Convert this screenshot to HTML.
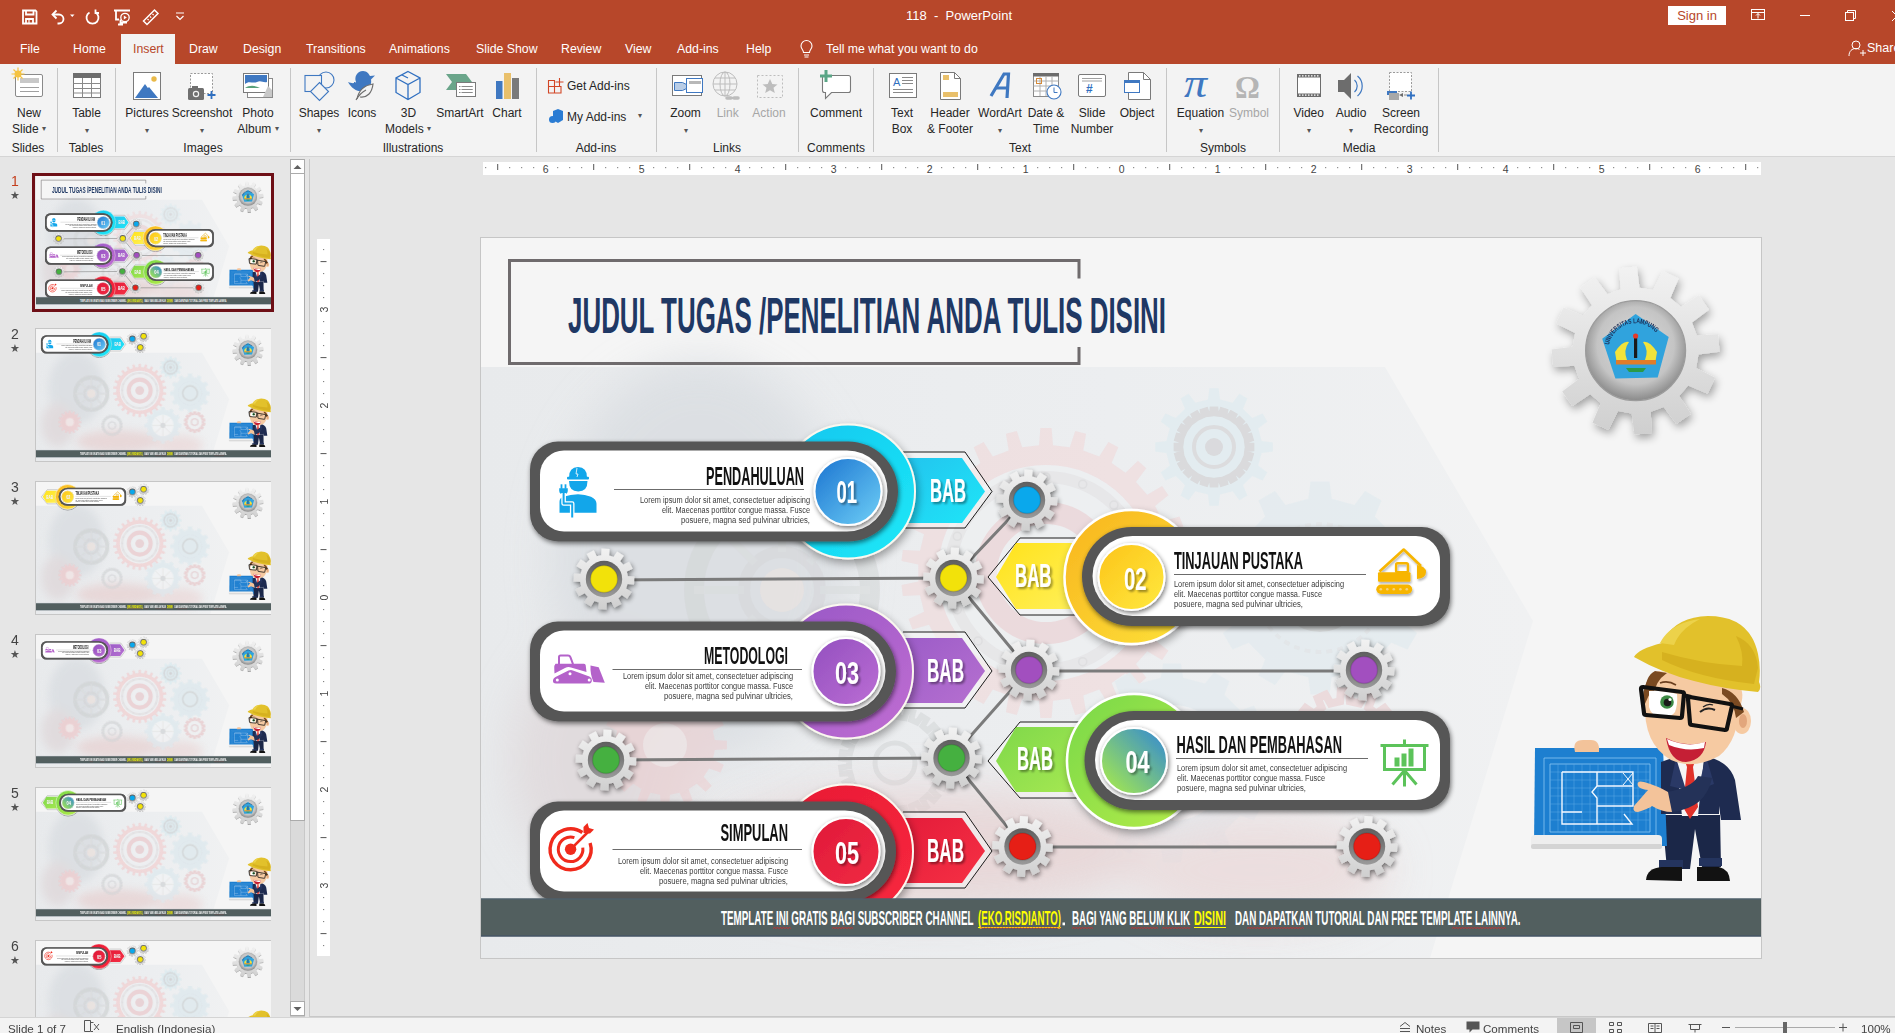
<!DOCTYPE html>
<html><head><meta charset="utf-8">
<style>
*{margin:0;padding:0;box-sizing:border-box}
html,body{width:1895px;height:1033px;overflow:hidden;background:#e6e6e6;font-family:"Liberation Sans",sans-serif;color:#262626}
.a{position:absolute}
.t{position:absolute;white-space:nowrap;line-height:1}
.c{transform:translateX(-50%)}
#titlebar{left:0;top:0;width:1895px;height:64px;background:#b7472a}
#ribbon{left:0;top:64px;width:1895px;height:93px;background:#f3f3f3;border-bottom:1px solid #d5d5d5}
.tab{color:#fff;font-size:12.3px;top:43px}
.rl{font-size:12px;color:#262626}
.sep{position:absolute;top:68px;width:1px;height:84px;background:#c6c6c6}
#status{left:0;top:1017px;width:1895px;height:16px;background:#f3f3f3;border-top:1px solid #d4d4d4}
</style></head><body>
<div id="titlebar" class="a"></div>
<div id="ribbon" class="a"></div>

<!-- quick access -->
<svg class="a" style="left:0;top:0" width="200" height="32" viewBox="0 0 200 32" fill="none" stroke="#fff" stroke-width="1.8">
 <path d="M23,10.5 h12.5 l1,1 v12 h-13.5z"/><path d="M26,10.5 v4 h7.5 v-4" /><path d="M26,23.5 v-4.5 h7 v4.5"/><path d="M29,20 v3" stroke-width="1.2"/>
 <path d="M53,14.5 h6 a4.5,4.5 0 0 1 0,9 h-1.5"/><path d="M56.5,10.5 l-4,4 4,4"/><path d="M70,14.5 h4.5 l-2.25,2.5z" fill="#fff" stroke="none"/>
 <path d="M89.5,12.5 a6,6 0 1 0 6,0"/><path d="M95.5,9.5 v3.5 h3.5"/>
 <path d="M114,10.5 h16M116,10.5 v9 h3M121,22.5 h6M118,24.5 h5M120.5,19.5 v5"/><circle cx="125" cy="17.5" r="4.2" stroke-width="1.3"/><path d="M123.8,15.5 v4 l3,-2z" fill="#fff" stroke="none"/>
 <path d="M143.5,21 l11,-11 3.5,3.5 -11,11z" stroke-width="1.5"/><path d="M147.5,19 l1.2,1.2M150,16.5 l1.2,1.2M152.5,14 l1.2,1.2" stroke-width="1.2"/>
 <path d="M176,13 h8M176.5,16 l3.5,3.5 3.5,-3.5" stroke-width="1.2"/>
</svg>
<div class="t c" style="left:959px;top:9px;font-size:13px;color:#fff">118&nbsp; -&nbsp; PowerPoint</div>
<div class="a" style="left:1668px;top:6px;width:58px;height:19px;background:#fff"></div>
<div class="t c" style="left:1697px;top:9px;font-size:13px;color:#b7472a">Sign in</div>
<svg class="a" style="left:1740px;top:0" width="155" height="64" viewBox="1740 0 155 64" fill="none" stroke="#fff" stroke-width="1">
 <rect x="1751.5" y="9.5" width="13" height="10"/><path d="M1751.5 12.5h13M1758 18.5v-5M1756 15.5l2-2 2 2"/>
 <path d="M1800 15.5h10"/>
 <rect x="1845.5" y="12.5" width="8" height="8"/><path d="M1847.5 12.5v-2h8v8h-2"/>
 <path d="M1892 11l10 10M1902 11l-10 10"/>
 <circle cx="1856" cy="45" r="4"/><path d="M1849 56c0-5 3-7.5 7-7.5 1.5 0 2.5.3 3.5.8M1860 53h6M1863 50v6"/>
</svg>
<div class="t" style="left:1867px;top:42px;font-size:12.5px;color:#fff">Share</div>
<div class="t c rl" style="left:29px;top:106.5px;color:#262626">New</div>
<div class="t c rl" style="left:29px;top:122.5px;color:#262626">Slide <span style="font-size:8px;vertical-align:2px;color:#555">▾</span></div>
<div class="t c rl" style="left:86.5px;top:106.5px;color:#262626">Table</div>
<div class="t c rl" style="left:86.5px;top:122.5px;color:#262626"><span style="font-size:8px;color:#555">▾</span></div>
<div class="t c rl" style="left:147px;top:106.5px;color:#262626">Pictures</div>
<div class="t c rl" style="left:147px;top:122.5px;color:#262626"><span style="font-size:8px;color:#555">▾</span></div>
<div class="t c rl" style="left:202px;top:106.5px;color:#262626">Screenshot</div>
<div class="t c rl" style="left:202px;top:122.5px;color:#262626"><span style="font-size:8px;color:#555">▾</span></div>
<div class="t c rl" style="left:258px;top:106.5px;color:#262626">Photo</div>
<div class="t c rl" style="left:258px;top:122.5px;color:#262626">Album <span style="font-size:8px;vertical-align:2px;color:#555">▾</span></div>
<div class="t c rl" style="left:319px;top:106.5px;color:#262626">Shapes</div>
<div class="t c rl" style="left:319px;top:122.5px;color:#262626"><span style="font-size:8px;color:#555">▾</span></div>
<div class="t c rl" style="left:362px;top:106.5px;color:#262626">Icons</div>
<div class="t c rl" style="left:408.5px;top:106.5px;color:#262626">3D</div>
<div class="t c rl" style="left:408px;top:122.5px;color:#262626">Models <span style="font-size:8px;vertical-align:2px;color:#555">▾</span></div>
<div class="t c rl" style="left:460px;top:106.5px;color:#262626">SmartArt</div>
<div class="t c rl" style="left:507px;top:106.5px;color:#262626">Chart</div>
<div class="t c rl" style="left:685.5px;top:106.5px;color:#262626">Zoom</div>
<div class="t c rl" style="left:685.5px;top:122.5px;color:#262626"><span style="font-size:8px;color:#555">▾</span></div>
<div class="t c rl" style="left:727.7px;top:106.5px;color:#a6a6a6">Link</div>
<div class="t c rl" style="left:769px;top:106.5px;color:#a6a6a6">Action</div>
<div class="t c rl" style="left:836px;top:106.5px;color:#262626">Comment</div>
<div class="t c rl" style="left:902px;top:106.5px;color:#262626">Text</div>
<div class="t c rl" style="left:902px;top:122.5px;color:#262626">Box</div>
<div class="t c rl" style="left:950px;top:106.5px;color:#262626">Header</div>
<div class="t c rl" style="left:950px;top:122.5px;color:#262626">&amp; Footer</div>
<div class="t c rl" style="left:1000px;top:106.5px;color:#262626">WordArt</div>
<div class="t c rl" style="left:1000px;top:122.5px;color:#262626"><span style="font-size:8px;color:#555">▾</span></div>
<div class="t c rl" style="left:1046px;top:106.5px;color:#262626">Date &amp;</div>
<div class="t c rl" style="left:1046px;top:122.5px;color:#262626">Time</div>
<div class="t c rl" style="left:1092px;top:106.5px;color:#262626">Slide</div>
<div class="t c rl" style="left:1092px;top:122.5px;color:#262626">Number</div>
<div class="t c rl" style="left:1137px;top:106.5px;color:#262626">Object</div>
<div class="t c rl" style="left:1200.5px;top:106.5px;color:#262626">Equation</div>
<div class="t c rl" style="left:1200.5px;top:122.5px;color:#262626"><span style="font-size:8px;color:#555">▾</span></div>
<div class="t c rl" style="left:1249px;top:106.5px;color:#a6a6a6">Symbol</div>
<div class="t c rl" style="left:1308.7px;top:106.5px;color:#262626">Video</div>
<div class="t c rl" style="left:1308.7px;top:122.5px;color:#262626"><span style="font-size:8px;color:#555">▾</span></div>
<div class="t c rl" style="left:1351px;top:106.5px;color:#262626">Audio</div>
<div class="t c rl" style="left:1351px;top:122.5px;color:#262626"><span style="font-size:8px;color:#555">▾</span></div>
<div class="t c rl" style="left:1401px;top:106.5px;color:#262626">Screen</div>
<div class="t c rl" style="left:1401px;top:122.5px;color:#262626">Recording</div>
<div class="t c rl" style="left:28px;top:141.5px">Slides</div>
<div class="t c rl" style="left:86px;top:141.5px">Tables</div>
<div class="t c rl" style="left:203px;top:141.5px">Images</div>
<div class="t c rl" style="left:413px;top:141.5px">Illustrations</div>
<div class="t c rl" style="left:596px;top:141.5px">Add-ins</div>
<div class="t c rl" style="left:727px;top:141.5px">Links</div>
<div class="t c rl" style="left:836px;top:141.5px">Comments</div>
<div class="t c rl" style="left:1020px;top:141.5px">Text</div>
<div class="t c rl" style="left:1223px;top:141.5px">Symbols</div>
<div class="t c rl" style="left:1359px;top:141.5px">Media</div>
<div class="sep" style="left:57px"></div>
<div class="sep" style="left:115px"></div>
<div class="sep" style="left:290px"></div>
<div class="sep" style="left:536px"></div>
<div class="sep" style="left:656px"></div>
<div class="sep" style="left:798px"></div>
<div class="sep" style="left:873px"></div>
<div class="sep" style="left:1166px"></div>
<div class="sep" style="left:1279px"></div>
<div class="sep" style="left:1438px"></div>
<div class="t rl" style="left:567px;top:80px">Get Add-ins</div>
<div class="t rl" style="left:567px;top:111px">My Add-ins</div>
<div class="t rl" style="left:638px;top:111px;font-size:9px"><span style="font-size:8px;color:#555">▾</span></div>

<svg class="a" style="left:0;top:64px" width="1440" height="66" viewBox="0 64 1440 66">
<g stroke-linejoin="miter">
 <!-- new slide -->
 <rect x="15.5" y="74.5" width="27" height="22" rx="1.5" fill="#fff" stroke="#8a8a8a"/>
 <rect x="20" y="78" width="19" height="5" fill="#c8c8c8"/><path d="M20 87.5h19M20 91.5h19" stroke="#a0a0a0"/>
 <circle cx="18" cy="74" r="3.5" fill="#f5c342"/><path d="M18 67.5v13M11.5 74h13M13.5 69.5l9 9M22.5 69.5l-9 9" stroke="#f5c342" stroke-width="1.2"/>
 <!-- table -->
 <rect x="73.5" y="73.5" width="27" height="24" fill="#fff" stroke="#7a7a7a"/><rect x="73" y="73" width="28" height="5" fill="#6d6d6d"/>
 <path d="M73.5 83.5h27M73.5 88.5h27M73.5 93h27M82.5 78v20M91.5 78v20" stroke="#8a8a8a"/>
 <!-- pictures -->
 <rect x="133.5" y="72.5" width="27" height="27" fill="#fff" stroke="#7a7a7a"/>
 <path d="M135 98l10-14 10 14z" fill="#3f78c1"/><path d="M145 98l4-6 4 6z" fill="#3f78c1"/><path d="M149 87l9 11h-4l-7-9z" fill="#3f78c1"/>
 <circle cx="154" cy="79" r="2.7" fill="#e9b949"/>
 <!-- screenshot -->
 <rect x="190.5" y="73.5" width="22" height="20" fill="#fff" stroke="#9a9a9a" stroke-dasharray="2 1.5"/>
 <rect x="188" y="88" width="16" height="12" rx="1.5" fill="#6f6f6f"/><rect x="192" y="86" width="6" height="3" fill="#6f6f6f"/><circle cx="196" cy="94" r="3.2" fill="#f3f3f3"/><circle cx="196" cy="94" r="2" fill="#6f6f6f"/>
 <path d="M211.5 91v8M207.5 95h8" stroke="#2f6fc0" stroke-width="1.8"/>
 <!-- photo album -->
 <rect x="247.5" y="78.5" width="25" height="19" fill="#fff" stroke="#8a8a8a"/>
 <rect x="243.5" y="73.5" width="25" height="19" fill="#fff" stroke="#7a7a7a"/>
 <rect x="245" y="75" width="22" height="9" fill="#3f78c1"/><path d="M245 84c4-4 8 0 12-2s6 1 10 0v2h-22z" fill="#fff"/><path d="M245 88c4-3 10-3 15 0z" fill="#58a07a"/>
 <path d="M268 86l4 4v7h-9z" fill="#c8c8c8"/>
 <!-- shapes -->
 <circle cx="326" cy="80" r="8" fill="none" stroke="#3f78c1" stroke-width="1.1"/>
 <rect x="305" y="75.5" width="16.5" height="16" fill="#f3f3f3" stroke="#3f78c1" stroke-width="1.1"/>
 <path d="M319.5 82.5l9 9-9 9-9-9z" fill="#f3f3f3" stroke="#3f78c1" stroke-width="1.1"/>
 <!-- icons -->
 <path d="M348 82c3 1 6 2 8 0-2-5 1-11 7-11 4 0 6 3 7 5l5-0.5-4 4c1 5-2 11-9 12-6 0-11-4-14-9.5z" fill="#3f78c1"/>
 <path d="M357 99c2-10 9-14 16-15-1 9-6 14-13 13" fill="#f3f3f3" stroke="#6e6e6e" stroke-width="1.2"/><path d="M356 100c3-5 6-8 10-10" stroke="#6e6e6e" stroke-width="1.2" fill="none"/>
 <!-- 3d -->
 <path d="M408 71.5l12 6.5v14.5l-12 7-12-7v-14.5z M396 78l12 6.5 12-6.5 M408 84.5v15 M402 75l6 3" fill="none" stroke="#2f6fc0" stroke-width="1.3"/>
 <!-- smartart -->
 <path d="M446 74h20l6 8-6 8h-20l6-8z" fill="#6aa58a"/>
 <rect x="456.5" y="82.5" width="19" height="14" fill="#fff" stroke="#7a7a7a"/><path d="M459 86.5h14M459 89.5h14M459 92.5h14" stroke="#8a8a8a" stroke-dasharray="1.5 1 11 0"/>
 <!-- chart -->
 <rect x="496" y="81" width="6.5" height="18" fill="#3f78c1"/><rect x="504" y="73" width="7" height="26" fill="#e9c06b"/><rect x="512" y="78" width="7" height="21" fill="#7a7a7a"/>
 <!-- get add-ins -->
 <path d="M548.5 80.5h6v6h-6zM548.5 86.5h6v6.5h-6zM554.5 86.5h6.5v6.5h-6.5z" fill="none" stroke="#d24726" stroke-width="1.1"/><path d="M559.5 78v8M555.5 82h8" stroke="#d24726" stroke-width="1.1"/>
 <!-- my add-ins -->
 <path d="M553 111l5-2 5 2v9l-5 3-5-3z" fill="#2b7cd3"/><circle cx="552.5" cy="119.5" r="3.5" fill="#2b7cd3"/>
 <!-- zoom -->
 <rect x="672.5" y="75.5" width="29" height="20" fill="#fff" stroke="#7a7a7a"/>
 <rect x="686.5" y="78.5" width="16" height="14" fill="#fff" stroke="#3f78c1"/><rect x="689" y="81" width="12" height="3" fill="#b8b8b8"/>
 <path d="M674.5 82.5h8l4 2v4l-4 2h-8z" fill="#b9cde6" stroke="#3f78c1"/>
 <!-- link -->
 <g fill="none" stroke="#bdbdbd"><circle cx="725" cy="84" r="12"/><ellipse cx="725" cy="84" rx="5" ry="12"/><path d="M713 84h24M715 78h20M715 90h20M725 72v24"/></g>
 <path d="M727 98h4M734 98h4" stroke="#bdbdbd" stroke-width="3.5" stroke-linecap="round"/>
 <!-- action -->
 <rect x="757.5" y="75.5" width="25" height="22" fill="none" stroke="#bdbdbd" stroke-dasharray="2 2"/>
 <path d="M770 79l2.3 5 5.2.4-4 3.4 1.3 5.2-4.8-2.8-4.8 2.8 1.3-5.2-4-3.4 5.2-.4z" fill="#bdbdbd"/>
 <!-- comment -->
 <path d="M822.5 75.5h26a2 2 0 0 1 2 2v13a2 2 0 0 1-2 2h-17l-6 6v-6h-1a2 2 0 0 1-2-2v-13a2 2 0 0 1 2-2z" fill="#fff" stroke="#7a7a7a" stroke-width="1.1"/>
 <path d="M826 70v12M820 76h12" stroke="#5aa586" stroke-width="3"/>
 <!-- text box -->
 <rect x="889.5" y="73.5" width="27" height="24" fill="#fff" stroke="#7a7a7a"/>
 <text x="893" y="86" font-size="11" fill="#2f6fc0" font-family="Liberation Sans">A</text><path d="M902 77.5h11M902 80.5h11M902 83.5h11M893 89.5h20M893 92.5h20" stroke="#8a8a8a"/>
 <!-- header footer -->
 <path d="M940.5 72.5h14l6 6v21h-20z" fill="#fff" stroke="#7a7a7a"/><path d="M954.5 72.5v6h6" fill="none" stroke="#7a7a7a"/>
 <rect x="943" y="75" width="6" height="5" fill="#e9c06b"/><rect x="943" y="92" width="15" height="5" fill="#e9c06b"/>
 <!-- wordart -->
 <path d="M991 96l13-22h4.5l-1.5 24" fill="none" stroke="#3f78c1" stroke-width="3.2"/><path d="M996 88h11" stroke="#3f78c1" stroke-width="3"/>
 <!-- date time -->
 <rect x="1033.5" y="73.5" width="25" height="23" fill="#fff" stroke="#8a8a8a"/><rect x="1033" y="73" width="26" height="3.5" fill="#6d6d6d"/>
 <path d="M1033.5 81h25M1033.5 86h25M1033.5 91h25M1040 76v20M1046 76v20M1052 76v20" stroke="#b0b0b0"/>
 <rect x="1036.5" y="78.5" width="5" height="5" fill="none" stroke="#d48a3a"/>
 <circle cx="1054" cy="92" r="7" fill="#fff" stroke="#3f78c1" stroke-width="1.1"/><path d="M1054 87.5v5h3.5" fill="none" stroke="#3f78c1"/>
 <!-- slide number -->
 <rect x="1078.5" y="74.5" width="27" height="22" rx="1.5" fill="#fff" stroke="#7a7a7a"/><path d="M1082 78.5h20M1082 81h20" stroke="#a0a0a0"/>
 <text x="1086" y="93" font-size="12" font-weight="bold" fill="#2f6fc0" font-family="Liberation Sans">#</text>
 <!-- object -->
 <path d="M1128.5 72.5h15l7 7v20h-22z" fill="#fff" stroke="#7a7a7a"/><path d="M1143.5 72.5v7h7" fill="none" stroke="#7a7a7a"/>
 <rect x="1124.5" y="80.5" width="15" height="12" fill="#fff" stroke="#3f78c1"/><rect x="1124" y="80" width="16" height="3" fill="#3f78c1"/>
 <!-- equation -->
 <text x="1186" y="97" font-size="40" fill="#3f78c1" font-family="Liberation Serif" font-style="italic" transform="translate(1200 86) scale(1.15 1) translate(-1200 -86)">&#960;</text>
 <!-- symbol -->
 <text x="1235" y="98" font-size="31" fill="#b5b5b5" font-family="Liberation Serif" font-weight="bold">&#937;</text>
 <!-- video -->
 <rect x="1297.5" y="74.5" width="23" height="22" fill="#fff" stroke="#6d6d6d"/><rect x="1297" y="74" width="24" height="3.5" fill="#6d6d6d"/><rect x="1297" y="93.5" width="24" height="3.5" fill="#6d6d6d"/>
 <path d="M1299 75.8h20M1299 95.2h20" stroke="#fff" stroke-width="1.2" stroke-dasharray="1.5 1.5"/>
 <!-- audio -->
 <path d="M1338 80h6l7-7v26l-7-7h-6z" fill="#6d6d6d"/><path d="M1354.5 80a8 8 0 0 1 0 12M1357.5 76a13 13 0 0 1 0 20" fill="none" stroke="#3f78c1" stroke-width="1.2"/>
 <!-- screen recording -->
 <rect x="1389.5" y="72.5" width="22" height="19" fill="#fff" stroke="#9a9a9a" stroke-dasharray="2 1.5"/>
 <rect x="1387" y="91" width="10" height="4" fill="#3f78c1"/><rect x="1389" y="93" width="10" height="7" fill="#a8a8a8"/><path d="M1399 95l4-2v4z" fill="#6d6d6d"/><path d="M1404 95h3" stroke="#8a8a8a"/>
 <path d="M1411 91.5v8M1407 95.5h8" stroke="#2f6fc0" stroke-width="1.8"/>
</g>
</svg>

<!-- tabs -->
<div class="a" style="left:121px;top:34px;width:54px;height:31px;background:#f3f3f3"></div>
<div class="t tab" style="left:20px">File</div>
<div class="t tab" style="left:73px">Home</div>
<div class="t tab" style="left:133px;color:#b7472a">Insert</div>
<div class="t tab" style="left:189px">Draw</div>
<div class="t tab" style="left:243px">Design</div>
<div class="t tab" style="left:306px">Transitions</div>
<div class="t tab" style="left:389px">Animations</div>
<div class="t tab" style="left:476px">Slide Show</div>
<div class="t tab" style="left:561px">Review</div>
<div class="t tab" style="left:625px">View</div>
<div class="t tab" style="left:677px">Add-ins</div>
<div class="t tab" style="left:746px">Help</div>
<svg class="a" style="left:798px;top:38px" width="18" height="22" viewBox="0 0 18 22" fill="none" stroke="#fff" stroke-width="1.1"><path d="M5.5 14.5c0-2.5-2.5-3.5-2.5-6.5a5.5 5.5 0 0 1 11 0c0 3-2.5 4-2.5 6.5z"/><path d="M6 17h5M6.5 19h4"/></svg>
<div class="t tab" style="left:826px">Tell me what you want to do</div>

<div id="status" class="a"></div>
<!-- SLIDE -->
<svg class="a" style="left:481px;top:238px" width="1280" height="720" viewBox="481 238 1280 720">
<defs>
<linearGradient id="gBody" x1="0" y1="0" x2="0" y2="1"><stop offset="0" stop-color="#f2f2f2"/><stop offset="1" stop-color="#cfcfcf"/></linearGradient>
<linearGradient id="gRing" x1="0" y1="0" x2="0" y2="1"><stop offset="0" stop-color="#5e5e5e"/><stop offset="1" stop-color="#9a9a9a"/></linearGradient>
<radialGradient id="gHole" cx="0.5" cy="0.45" r="0.55"><stop offset="0" stop-color="#dcdcdc"/><stop offset="0.7" stop-color="#c4c4c4"/><stop offset="1" stop-color="#8a8a8a"/></radialGradient>
<filter id="sh" x="-30%" y="-30%" width="160%" height="160%"><feGaussianBlur in="SourceAlpha" stdDeviation="2.8"/><feOffset dx="1" dy="2"/><feComponentTransfer><feFuncA type="linear" slope="0.55"/></feComponentTransfer><feMerge><feMergeNode/><feMergeNode in="SourceGraphic"/></feMerge></filter>
<filter id="sh2" x="-30%" y="-30%" width="160%" height="160%"><feGaussianBlur in="SourceAlpha" stdDeviation="4"/><feOffset dx="2" dy="4"/><feComponentTransfer><feFuncA type="linear" slope="0.35"/></feComponentTransfer><feMerge><feMergeNode/><feMergeNode in="SourceGraphic"/></feMerge></filter>
<filter id="tsh" x="-10%" y="-10%" width="130%" height="130%"><feGaussianBlur in="SourceAlpha" stdDeviation="1"/><feOffset dx="1.5" dy="1.5"/><feComponentTransfer><feFuncA type="linear" slope="0.4"/></feComponentTransfer><feMerge><feMergeNode/><feMergeNode in="SourceGraphic"/></feMerge></filter>
<filter id="ish" x="-20%" y="-20%" width="150%" height="150%"><feGaussianBlur in="SourceAlpha" stdDeviation="1.2"/><feOffset dx="1" dy="1.5"/><feComponentTransfer><feFuncA type="linear" slope="0.3"/></feComponentTransfer><feMerge><feMergeNode/><feMergeNode in="SourceGraphic"/></feMerge></filter>
<filter id="blur3"><feGaussianBlur stdDeviation="3"/></filter>
<filter id="blur8"><feGaussianBlur stdDeviation="10"/></filter><filter id="blur20" x="-50%" y="-50%" width="200%" height="200%"><feGaussianBlur stdDeviation="22"/></filter>
<linearGradient id="big1" x1="0" y1="0" x2="1" y2="1"><stop offset="0" stop-color="#10c6ef"/><stop offset="1" stop-color="#1ee8f7"/></linearGradient><linearGradient id="num1" x1="0" y1="0" x2="1" y2="1"><stop offset="0" stop-color="#1a73d0"/><stop offset="1" stop-color="#6fd0f7"/></linearGradient><linearGradient id="bab1" x1="0" y1="0" x2="1" y2="1"><stop offset="0" stop-color="#23c4ee"/><stop offset="1" stop-color="#1ee6f8"/></linearGradient><radialGradient id="dot1" cx="0.5" cy="0.5" r="0.5"><stop offset="0.6" stop-color="#0aa8ec"/><stop offset="1" stop-color="#0aa8ec" stop-opacity="0.8"/></radialGradient><linearGradient id="big2" x1="0" y1="0" x2="1" y2="1"><stop offset="0" stop-color="#f8b41e"/><stop offset="1" stop-color="#fde23a"/></linearGradient><linearGradient id="num2" x1="0" y1="0" x2="1" y2="1"><stop offset="0" stop-color="#fcc419"/><stop offset="1" stop-color="#ffe93f"/></linearGradient><linearGradient id="bab2" x1="0" y1="0" x2="1" y2="1"><stop offset="0" stop-color="#ffe21a"/><stop offset="1" stop-color="#fff05a"/></linearGradient><radialGradient id="dot2" cx="0.5" cy="0.5" r="0.5"><stop offset="0.6" stop-color="#f2e20a"/><stop offset="1" stop-color="#f2e20a" stop-opacity="0.8"/></radialGradient><linearGradient id="big3" x1="0" y1="0" x2="1" y2="1"><stop offset="0" stop-color="#9757c6"/><stop offset="1" stop-color="#c06dd2"/></linearGradient><linearGradient id="num3" x1="0" y1="0" x2="1" y2="1"><stop offset="0" stop-color="#9350bf"/><stop offset="1" stop-color="#bb6dd4"/></linearGradient><linearGradient id="bab3" x1="0" y1="0" x2="1" y2="1"><stop offset="0" stop-color="#9c5cc8"/><stop offset="1" stop-color="#b670d0"/></linearGradient><radialGradient id="dot3" cx="0.5" cy="0.5" r="0.5"><stop offset="0.6" stop-color="#a24fbf"/><stop offset="1" stop-color="#a24fbf" stop-opacity="0.8"/></radialGradient><linearGradient id="big4" x1="0" y1="0" x2="1" y2="1"><stop offset="0" stop-color="#78d848"/><stop offset="1" stop-color="#b6ec48"/></linearGradient><linearGradient id="num4" x1="1" y1="0" x2="0" y2="1"><stop offset="0" stop-color="#2f86d8"/><stop offset="0.85" stop-color="#9ae05a"/></linearGradient><linearGradient id="bab4" x1="0" y1="0" x2="1" y2="1"><stop offset="0" stop-color="#7fd84a"/><stop offset="1" stop-color="#a6e852"/></linearGradient><radialGradient id="dot4" cx="0.5" cy="0.5" r="0.5"><stop offset="0.6" stop-color="#45b040"/><stop offset="1" stop-color="#45b040" stop-opacity="0.8"/></radialGradient><linearGradient id="big5" x1="0" y1="0" x2="1" y2="1"><stop offset="0" stop-color="#e81a34"/><stop offset="1" stop-color="#f8283e"/></linearGradient><linearGradient id="num5" x1="0" y1="0" x2="1" y2="1"><stop offset="0" stop-color="#e01a38"/><stop offset="1" stop-color="#f02a44"/></linearGradient><linearGradient id="bab5" x1="0" y1="0" x2="1" y2="1"><stop offset="0" stop-color="#e41c3a"/><stop offset="1" stop-color="#f63044"/></linearGradient><radialGradient id="dot5" cx="0.5" cy="0.5" r="0.5"><stop offset="0.6" stop-color="#e61f16"/><stop offset="1" stop-color="#e61f16" stop-opacity="0.8"/></radialGradient>
<g id="bgsym"><rect x="481" y="238" width="1280" height="720" fill="#f5f5f5"/>
<linearGradient id="hexg" x1="0" y1="0" x2="1" y2="0"><stop offset="0" stop-color="#e8eaec"/><stop offset="0.6" stop-color="#eceef0"/><stop offset="1" stop-color="#f0f1f2"/></linearGradient>
<path d="M481,367 H1385 L1533,621 L1430,958 H481 Z" fill="url(#hexg)"/>
<g filter="url(#blur20)" opacity="0.8"><ellipse cx="700" cy="560" rx="150" ry="200" fill="#d9dde1"/><ellipse cx="600" cy="760" rx="90" ry="120" fill="#dfd8da"/></g>
<g id="bggears" opacity="0.65"><path d="M1039.0,445.2 L1040.4,428.1 L1051.6,428.1 L1053.0,445.2 L1069.8,447.2 L1075.2,431.0 L1086.1,433.7 L1083.3,450.6 L1099.2,456.6 L1108.4,442.1 L1118.3,447.3 L1111.6,463.1 L1125.5,472.7 L1137.9,460.8 L1146.3,468.3 L1136.0,481.9 L1147.2,494.7 L1162.1,486.1 L1168.4,495.3 L1155.1,506.1 L1163.0,521.2 L1179.5,516.4 L1183.5,526.9 L1168.0,534.2 L1172.0,550.7 L1189.2,550.0 L1190.5,561.1 L1173.7,564.5 L1173.7,581.5 L1190.5,584.9 L1189.2,596.0 L1172.0,595.3 L1168.0,611.8 L1183.5,619.1 L1179.5,629.6 L1163.0,624.8 L1155.1,639.9 L1168.4,650.7 L1162.1,659.9 L1147.2,651.3 L1136.0,664.1 L1146.3,677.7 L1137.9,685.2 L1125.5,673.3 L1111.6,682.9 L1118.3,698.7 L1108.4,703.9 L1099.2,689.4 L1083.3,695.4 L1086.1,712.3 L1075.2,715.0 L1069.8,698.8 L1053.0,700.8 L1051.6,717.9 L1040.4,717.9 L1039.0,700.8 L1022.2,698.8 L1016.8,715.0 L1005.9,712.3 L1008.7,695.4 L992.8,689.4 L983.6,703.9 L973.7,698.7 L980.4,682.9 L966.5,673.3 L954.1,685.2 L945.7,677.7 L956.0,664.1 L944.8,651.3 L929.9,659.9 L923.6,650.7 L936.9,639.9 L929.0,624.8 L912.5,629.6 L908.5,619.1 L924.0,611.8 L920.0,595.3 L902.8,596.0 L901.5,584.9 L918.3,581.5 L918.3,564.5 L901.5,561.1 L902.8,550.0 L920.0,550.7 L924.0,534.2 L908.5,526.9 L912.5,516.4 L929.0,521.2 L936.9,506.1 L923.6,495.3 L929.9,486.1 L944.8,494.7 L956.0,481.9 L945.7,468.3 L954.1,460.8 L966.5,472.7 L980.4,463.1 L973.7,447.3 L983.6,442.1 L992.8,456.6 L1008.7,450.6 L1005.9,433.7 L1016.8,431.0 L1022.2,447.2Z" fill="#f2c9cb" opacity="0.55"/>
<circle cx="1046" cy="573" r="108" fill="#eef0f2"/>
<circle cx="1046" cy="573" r="96" fill="none" stroke="#dcd6d8" stroke-width="12" opacity="0.5"/>
<circle cx="1142.0" cy="573.0" r="4" fill="none" stroke="#cfcfd1" stroke-width="1.5" opacity="0.6"/>
<circle cx="1134.7" cy="609.7" r="4" fill="none" stroke="#cfcfd1" stroke-width="1.5" opacity="0.6"/>
<circle cx="1113.9" cy="640.9" r="4" fill="none" stroke="#cfcfd1" stroke-width="1.5" opacity="0.6"/>
<circle cx="1082.7" cy="661.7" r="4" fill="none" stroke="#cfcfd1" stroke-width="1.5" opacity="0.6"/>
<circle cx="1046.0" cy="669.0" r="4" fill="none" stroke="#cfcfd1" stroke-width="1.5" opacity="0.6"/>
<circle cx="1009.3" cy="661.7" r="4" fill="none" stroke="#cfcfd1" stroke-width="1.5" opacity="0.6"/>
<circle cx="978.1" cy="640.9" r="4" fill="none" stroke="#cfcfd1" stroke-width="1.5" opacity="0.6"/>
<circle cx="957.3" cy="609.7" r="4" fill="none" stroke="#cfcfd1" stroke-width="1.5" opacity="0.6"/>
<circle cx="950.0" cy="573.0" r="4" fill="none" stroke="#cfcfd1" stroke-width="1.5" opacity="0.6"/>
<circle cx="957.3" cy="536.3" r="4" fill="none" stroke="#cfcfd1" stroke-width="1.5" opacity="0.6"/>
<circle cx="978.1" cy="505.1" r="4" fill="none" stroke="#cfcfd1" stroke-width="1.5" opacity="0.6"/>
<circle cx="1009.3" cy="484.3" r="4" fill="none" stroke="#cfcfd1" stroke-width="1.5" opacity="0.6"/>
<circle cx="1046.0" cy="477.0" r="4" fill="none" stroke="#cfcfd1" stroke-width="1.5" opacity="0.6"/>
<circle cx="1082.7" cy="484.3" r="4" fill="none" stroke="#cfcfd1" stroke-width="1.5" opacity="0.6"/>
<circle cx="1113.9" cy="505.1" r="4" fill="none" stroke="#cfcfd1" stroke-width="1.5" opacity="0.6"/>
<circle cx="1134.7" cy="536.3" r="4" fill="none" stroke="#cfcfd1" stroke-width="1.5" opacity="0.6"/>
<circle cx="1046" cy="573" r="60" fill="none" stroke="#e9c2c5" stroke-width="22" opacity="0.7"/>
<circle cx="1046" cy="573" r="24" fill="#e4b9bc" opacity="0.6"/>
<circle cx="782" cy="590" r="88" fill="none" stroke="#d2d4d6" stroke-width="20" opacity="0.8"/>
<circle cx="782" cy="590" r="38" fill="none" stroke="#d4d6d8" stroke-width="12" opacity="0.8"/>
<g stroke="#dadcde" stroke-width="8" opacity="0.8"><path d="M782,502 V552 M782,628 V678 M694,590 H744 M820,590 H870 M720,528 L755,563 M809,617 L844,652 M844,528 L809,563 M755,617 L720,652"/></g>
<circle cx="782" cy="590" r="22" fill="#ede4e0" opacity="0.8"/>
<path d="M1208.0,399.4 L1209.4,388.2 L1218.6,388.2 L1220.0,399.4 L1232.6,402.8 L1239.4,393.7 L1247.4,398.4 L1243.0,408.8 L1252.2,418.0 L1262.6,413.6 L1267.3,421.6 L1258.2,428.4 L1261.6,441.0 L1272.8,442.4 L1272.8,451.6 L1261.6,453.0 L1258.2,465.6 L1267.3,472.4 L1262.6,480.4 L1252.2,476.0 L1243.0,485.2 L1247.4,495.6 L1239.4,500.3 L1232.6,491.2 L1220.0,494.6 L1218.6,505.8 L1209.4,505.8 L1208.0,494.6 L1195.4,491.2 L1188.6,500.3 L1180.6,495.6 L1185.0,485.2 L1175.8,476.0 L1165.4,480.4 L1160.7,472.4 L1169.8,465.6 L1166.4,453.0 L1155.2,451.6 L1155.2,442.4 L1166.4,441.0 L1169.8,428.4 L1160.7,421.6 L1165.4,413.6 L1175.8,418.0 L1185.0,408.8 L1180.6,398.4 L1188.6,393.7 L1195.4,402.8Z" fill="#dcebef" opacity="0.9"/>
<path d="M1211.6,414.1 L1212.0,409.1 L1216.0,409.1 L1216.4,414.1 L1220.2,414.6 L1221.9,409.8 L1225.7,410.9 L1224.8,415.8 L1228.4,417.3 L1231.3,413.1 L1234.7,415.1 L1232.5,419.7 L1235.6,422.0 L1239.4,418.8 L1242.2,421.6 L1239.0,425.4 L1241.3,428.5 L1245.9,426.3 L1247.9,429.7 L1243.7,432.6 L1245.2,436.2 L1250.1,435.3 L1251.2,439.1 L1246.4,440.8 L1246.9,444.6 L1251.9,445.0 L1251.9,449.0 L1246.9,449.4 L1246.4,453.2 L1251.2,454.9 L1250.1,458.7 L1245.2,457.8 L1243.7,461.4 L1247.9,464.3 L1245.9,467.7 L1241.3,465.5 L1239.0,468.6 L1242.2,472.4 L1239.4,475.2 L1235.6,472.0 L1232.5,474.3 L1234.7,478.9 L1231.3,480.9 L1228.4,476.7 L1224.8,478.2 L1225.7,483.1 L1221.9,484.2 L1220.2,479.4 L1216.4,479.9 L1216.0,484.9 L1212.0,484.9 L1211.6,479.9 L1207.8,479.4 L1206.1,484.2 L1202.3,483.1 L1203.2,478.2 L1199.6,476.7 L1196.7,480.9 L1193.3,478.9 L1195.5,474.3 L1192.4,472.0 L1188.6,475.2 L1185.8,472.4 L1189.0,468.6 L1186.7,465.5 L1182.1,467.7 L1180.1,464.3 L1184.3,461.4 L1182.8,457.8 L1177.9,458.7 L1176.8,454.9 L1181.6,453.2 L1181.1,449.4 L1176.1,449.0 L1176.1,445.0 L1181.1,444.6 L1181.6,440.8 L1176.8,439.1 L1177.9,435.3 L1182.8,436.2 L1184.3,432.6 L1180.1,429.7 L1182.1,426.3 L1186.7,428.5 L1189.0,425.4 L1185.8,421.6 L1188.6,418.8 L1192.4,422.0 L1195.5,419.7 L1193.3,415.1 L1196.7,413.1 L1199.6,417.3 L1203.2,415.8 L1202.3,410.9 L1206.1,409.8 L1207.8,414.6Z" fill="none" stroke="#cfcfd1" stroke-width="5"/>
<circle cx="1214" cy="447" r="20" fill="none" stroke="#d2d2d4" stroke-width="4"/><circle cx="1214" cy="447" r="9" fill="#d0d0d2"/>
<path d="M1308.3,498.8 L1310.5,481.4 L1329.5,481.4 L1331.7,498.8 L1354.4,504.9 L1365.1,490.9 L1381.5,500.5 L1374.8,516.6 L1391.4,533.2 L1407.5,526.5 L1417.1,542.9 L1403.1,553.6 L1409.2,576.3 L1426.6,578.5 L1426.6,597.5 L1409.2,599.7 L1403.1,622.4 L1417.1,633.1 L1407.5,649.5 L1391.4,642.8 L1374.8,659.4 L1381.5,675.5 L1365.1,685.1 L1354.4,671.1 L1331.7,677.2 L1329.5,694.6 L1310.5,694.6 L1308.3,677.2 L1285.6,671.1 L1274.9,685.1 L1258.5,675.5 L1265.2,659.4 L1248.6,642.8 L1232.5,649.5 L1222.9,633.1 L1236.9,622.4 L1230.8,599.7 L1213.4,597.5 L1213.4,578.5 L1230.8,576.3 L1236.9,553.6 L1222.9,542.9 L1232.5,526.5 L1248.6,533.2 L1265.2,516.6 L1258.5,500.5 L1274.9,490.9 L1285.6,504.9Z" fill="#dfeaee" opacity="0.9"/>
<circle cx="1320" cy="588" r="64" fill="none" stroke="#d8dadc" stroke-width="4" stroke-dasharray="6 5" opacity="0.6"/><circle cx="1320" cy="588" r="40" fill="none" stroke="#d0d2d4" stroke-width="8"/>
<path d="M660.1,695.2 L660.7,683.1 L669.3,683.1 L669.9,695.2 L679.5,697.2 L684.7,686.2 L692.6,689.5 L688.6,700.9 L696.7,706.3 L705.7,698.3 L711.7,704.3 L703.7,713.3 L709.1,721.4 L720.5,717.4 L723.8,725.3 L712.8,730.5 L714.8,740.1 L726.9,740.7 L726.9,749.3 L714.8,749.9 L712.8,759.5 L723.8,764.7 L720.5,772.6 L709.1,768.6 L703.7,776.7 L711.7,785.7 L705.7,791.7 L696.7,783.7 L688.6,789.1 L692.6,800.5 L684.7,803.8 L679.5,792.8 L669.9,794.8 L669.3,806.9 L660.7,806.9 L660.1,794.8 L650.5,792.8 L645.3,803.8 L637.4,800.5 L641.4,789.1 L633.3,783.7 L624.3,791.7 L618.3,785.7 L626.3,776.7 L620.9,768.6 L609.5,772.6 L606.2,764.7 L617.2,759.5 L615.2,749.9 L603.1,749.3 L603.1,740.7 L615.2,740.1 L617.2,730.5 L606.2,725.3 L609.5,717.4 L620.9,721.4 L626.3,713.3 L618.3,704.3 L624.3,698.3 L633.3,706.3 L641.4,700.9 L637.4,689.5 L645.3,686.2 L650.5,697.2Z" fill="#efcdcf" opacity="0.8"/><circle cx="665" cy="745" r="22" fill="#f1e6e6"/>
<path d="M891.7,717.1 L891.9,709.1 L898.1,709.1 L898.3,717.1 L904.8,718.1 L907.2,710.4 L913.1,712.1 L911.1,719.9 L917.0,722.6 L921.6,716.0 L926.7,719.3 L922.6,726.2 L927.5,730.5 L933.7,725.4 L937.8,730.0 L931.8,735.4 L935.4,741.0 L942.8,737.8 L945.3,743.4 L938.1,746.9 L939.9,753.2 L947.9,752.3 L948.8,758.4 L940.9,759.7 L940.9,766.3 L948.8,767.6 L947.9,773.7 L939.9,772.8 L938.1,779.1 L945.3,782.6 L942.8,788.2 L935.4,785.0 L931.8,790.6 L937.8,796.0 L933.7,800.6 L927.5,795.5 L922.6,799.8 L926.7,806.7 L921.6,810.0 L917.0,803.4 L911.1,806.1 L913.1,813.9 L907.2,815.6 L904.8,807.9 L898.3,808.9 L898.1,816.9 L891.9,816.9 L891.7,808.9 L885.2,807.9 L882.8,815.6 L876.9,813.9 L878.9,806.1 L873.0,803.4 L868.4,810.0 L863.3,806.7 L867.4,799.8 L862.5,795.5 L856.3,800.6 L852.2,796.0 L858.2,790.6 L854.6,785.0 L847.2,788.2 L844.7,782.6 L851.9,779.1 L850.1,772.8 L842.1,773.7 L841.2,767.6 L849.1,766.3 L849.1,759.7 L841.2,758.4 L842.1,752.3 L850.1,753.2 L851.9,746.9 L844.7,743.4 L847.2,737.8 L854.6,741.0 L858.2,735.4 L852.2,730.0 L856.3,725.4 L862.5,730.5 L867.4,726.2 L863.3,719.3 L868.4,716.0 L873.0,722.6 L878.9,719.9 L876.9,712.1 L882.8,710.4 L885.2,718.1Z" fill="none" stroke="#d6d8da" stroke-width="6"/><circle cx="895" cy="763" r="20" fill="none" stroke="#d6d8da" stroke-width="5"/>
<path d="M1160.8,677.7 L1163.1,663.4 L1180.9,663.4 L1183.2,677.7 L1204.9,683.5 L1214.1,672.3 L1229.5,681.2 L1224.4,694.8 L1240.2,710.6 L1253.8,705.5 L1262.7,720.9 L1251.5,730.1 L1257.3,751.8 L1271.6,754.1 L1271.6,771.9 L1257.3,774.2 L1251.5,795.9 L1262.7,805.1 L1253.8,820.5 L1240.2,815.4 L1224.4,831.2 L1229.5,844.8 L1214.1,853.7 L1204.9,842.5 L1183.2,848.3 L1180.9,862.6 L1163.1,862.6 L1160.8,848.3 L1139.1,842.5 L1129.9,853.7 L1114.5,844.8 L1119.6,831.2 L1103.8,815.4 L1090.2,820.5 L1081.3,805.1 L1092.5,795.9 L1086.7,774.2 L1072.4,771.9 L1072.4,754.1 L1086.7,751.8 L1092.5,730.1 L1081.3,720.9 L1090.2,705.5 L1103.8,710.6 L1119.6,694.8 L1114.5,681.2 L1129.9,672.3 L1139.1,683.5Z" fill="#e0eaee" opacity="0.9"/><circle cx="1172" cy="763" r="58" fill="#f1f3f4"/><g stroke="#dcdcdc" stroke-width="3"><path d="M1172,705 V821 M1114,763 H1230 M1131,722 L1213,804 M1213,722 L1131,804"/></g><circle cx="1172" cy="763" r="14" fill="#d6d8da"/>
<path d="M1340.1,701.3 L1340.8,691.2 L1349.2,691.2 L1349.9,701.3 L1359.5,703.5 L1364.5,694.7 L1372.2,698.3 L1368.4,707.7 L1376.1,713.9 L1384.4,708.1 L1389.7,714.7 L1382.3,721.6 L1386.5,730.5 L1396.5,728.9 L1398.4,737.2 L1388.7,740.1 L1388.7,749.9 L1398.4,752.8 L1396.5,761.1 L1386.5,759.5 L1382.3,768.4 L1389.7,775.3 L1384.4,781.9 L1376.1,776.1 L1368.4,782.3 L1372.2,791.7 L1364.5,795.3 L1359.5,786.5 L1349.9,788.7 L1349.2,798.8 L1340.8,798.8 L1340.1,788.7 L1330.5,786.5 L1325.5,795.3 L1317.8,791.7 L1321.6,782.3 L1313.9,776.1 L1305.6,781.9 L1300.3,775.3 L1307.7,768.4 L1303.5,759.5 L1293.5,761.1 L1291.6,752.8 L1301.3,749.9 L1301.3,740.1 L1291.6,737.2 L1293.5,728.9 L1303.5,730.5 L1307.7,721.6 L1300.3,714.7 L1305.6,708.1 L1313.9,713.9 L1321.6,707.7 L1317.8,698.3 L1325.5,694.7 L1330.5,703.5Z" fill="none" stroke="#e9cfd1" stroke-width="8"/><circle cx="1345" cy="745" r="18" fill="none" stroke="#e6d2d4" stroke-width="6"/></g>
<g filter="url(#blur20)" opacity="0.7"><ellipse cx="930" cy="850" rx="230" ry="60" fill="#e6cfcf"/><ellipse cx="1260" cy="870" rx="130" ry="55" fill="#ead7d7"/></g></g>
<g id="logosym"><g filter="url(#sh2)"><path d="M1620.5,289.4 L1619.3,268.2 L1636.8,266.6 L1639.5,287.7 L1653.1,290.1 L1662.7,271.1 L1678.7,278.5 L1670.4,298.1 L1681.0,307.0 L1698.8,295.3 L1709.0,309.7 L1692.0,322.5 L1696.8,335.5 L1718.0,334.3 L1719.6,351.8 L1698.5,354.5 L1696.1,368.1 L1715.1,377.7 L1707.7,393.7 L1688.1,385.4 L1679.2,396.0 L1690.9,413.8 L1676.5,424.0 L1663.7,407.0 L1650.7,411.8 L1651.9,433.0 L1634.4,434.6 L1631.7,413.5 L1618.1,411.1 L1608.5,430.1 L1592.5,422.7 L1600.8,403.1 L1590.2,394.2 L1572.4,405.9 L1562.2,391.5 L1579.2,378.7 L1574.4,365.7 L1553.2,366.9 L1551.6,349.4 L1572.7,346.7 L1575.1,333.1 L1556.1,323.5 L1563.5,307.5 L1583.1,315.8 L1592.0,305.2 L1580.3,287.4 L1594.7,277.2 L1607.5,294.2Z" fill="url(#gBody)"/></g>
<circle cx="1635.6" cy="350.6" r="50" fill="url(#gHole)"/><circle cx="1635.6" cy="350.6" r="50" fill="none" stroke="#9c9c9c" stroke-width="1.2"/>
<path d="M1635.6,314 L1668.7,337 L1657.7,377.5 L1615.4,378.6 L1602.2,338.7 Z" fill="#30a3dd"/>
<path d="M1615,352 q8,-12 14,-10 q-6,8 -2,18 h18 q4,-10 -2,-18 q6,-2 14,10 l-2,12 h-38z" fill="#f2e33a"/>
<rect x="1616" y="360" width="40" height="4.5" fill="#e07c2a"/><path d="M1626,368 h20 l-3,4 h-14z" fill="#2a9a48"/>
<rect x="1634" y="338" width="3.2" height="20" fill="#1a1a1a"/><circle cx="1635.6" cy="336" r="2.6" fill="#e23a2a"/>
<path id="arcU" d="M1609,345 A27,27 0 0 1 1662,345" fill="none"/><text font-size="7" font-family="Liberation Sans" font-weight="bold" fill="#1b2c55"><textPath href="#arcU" textLength="60" lengthAdjust="spacingAndGlyphs">UNIVERSITAS LAMPUNG</textPath></text></g>
<g id="engsym">
<g>
<!-- legs -->
<path d="M1662,815 h58 l1,52 h-19 l-7,-38 l-5,40 h-23z" fill="#1b2748"/>
<path d="M1659,860 h24 v8 h-24z" fill="#24345e"/><path d="M1699,858 h23 v8 h-23z" fill="#24345e"/>
<path d="M1646,880 q1,-12 16,-13 h20 v14z" fill="#121212"/><path d="M1697,881 v-14 h22 q10,2 11,14z" fill="#121212"/>
<!-- blueprint -->
<path d="M1535,748 h128 l4,98 h-133z" fill="#1d7fd0"/>
<path d="M1544,758 h112 v80 h-112z" fill="none" stroke="#8cc6f2" stroke-width="0.8"/>
<path d="M1550,764 h100 v68 h-100z" fill="none" stroke="#8cc6f2" stroke-width="0.8"/>
<g stroke="#5fa8e4" stroke-width="0.5"><path d="M1550,772h100M1550,780h100M1550,788h100M1550,796h100M1550,804h100M1550,812h100M1550,820h100M1558,764v68M1566,764v68M1574,764v68M1582,764v68M1590,764v68M1598,764v68M1606,764v68M1614,764v68M1622,764v68M1630,764v68M1638,764v68M1646,764v68"/></g>
<path d="M1562,772 h35 v14 l-5,6 l5,6 v8 h36 v-34 h-71 z M1597,786 h36 M1562,772 v52 h70 l-8,-10 M1597,806 v18 M1562,812 h20" fill="none" stroke="#f2f8ff" stroke-width="1.4"/>
<path d="M1623,773 l10,12 M1633,773 l-10,12" stroke="#f2f8ff" stroke-width="1"/>
<rect x="1531" y="835" width="131" height="14" rx="4" fill="#eeeeee"/><rect x="1531" y="844" width="131" height="5" rx="2" fill="#d4d4d4"/>
<path d="M1575,752 q-3,-12 8,-12 h8 q9,0 8,12z" fill="#f3c39a"/>
<!-- body jacket -->
<path d="M1661,762 q20,-8 42,-6 q26,4 32,24 l6,40 h-20 l-2,-14 v8 h-58z" fill="#1e2b50"/>
<path d="M1676,758 h28 l-6,58 h-16z" fill="#f5f5f5"/>
<path d="M1685,761 h10 l-2,6 l5,40 l-8,12 l-7,-12 l4,-40z" fill="#e0322a"/>
<path d="M1676,758 l10,32 l-16,-4z M1706,756 l-8,34 l16,-6z" fill="#2a3966"/>
<!-- left arm pointing -->
<path d="M1712,778 q-6,30 -40,34 l-6,-20 q26,-4 32,-16z" fill="#243258"/>
<path d="M1668,792 q-10,-6 -24,-10 q-8,-2 -6,4 q2,3 10,4 l-14,16 q-2,6 4,6 q12,-4 14,-6 q10,6 20,6z" fill="#f3c39a"/>
<!-- head -->
<path d="M1645,702 q-2,42 26,58 q22,10 48,-4 q20,-16 20,-52 l-10,-20 h-80z" fill="#f6caa2"/>
<path d="M1647,690 q1,-16 12,-19 l78,13 q8,6 4,20 z" fill="#f6caa2"/><path d="M1645,694 q0,-18 10,-23 l12,2 q-12,8 -14,24z" fill="#7a4a22"/>
<ellipse cx="1742" cy="721" rx="9" ry="13" fill="#f6caa2"/><ellipse cx="1743" cy="721" rx="4" ry="7" fill="#e2a67c"/>
<path d="M1650,676 q-10,16 -6,30 l10,-22z" fill="#7a4a22"/><path d="M1722,688 q16,4 22,24 l-8,6 q-2,-16 -14,-24z" fill="#7a4a22"/>
<!-- glasses -->
<path d="M1649,691 q14,-1 28,3 q1,10 -2,18 q-4,6 -14,5 q-10,-1 -12,-10 z" fill="#fff"/>
<circle cx="1667" cy="702" r="6.8" fill="#3d8a45"/><circle cx="1667.5" cy="702.5" r="3.8" fill="#1a1a1a"/><circle cx="1670" cy="699.5" r="1.6" fill="#fff"/>
<path d="M1643,687 l39,5 q2,0 2,2 l-2,22 q0,2 -2,2 l-34,-3 q-2,0 -2,-2 l-3,-24 q0,-2 2,-2z" fill="none" stroke="#111" stroke-width="4.2" stroke-linejoin="round"/>
<path d="M1690,697 l40,7 q2,0 2,2 l-5,22 q0,2 -2,2 l-33,-5 q-2,0 -2,-2 l-2,-24 q0,-2 2,-2z" fill="none" stroke="#111" stroke-width="4.2" stroke-linejoin="round"/>
<path d="M1683,695 l8,2" stroke="#111" stroke-width="4"/><path d="M1731,706 l12,3" stroke="#111" stroke-width="3"/>
<path d="M1700,712 q7,-6 15,-2" fill="none" stroke="#222" stroke-width="2"/><path d="M1703,707 q5,-4 10,-2" fill="none" stroke="#222" stroke-width="1.2"/>
<path d="M1660,683 q8,-3 16,2" fill="none" stroke="#6b3f1f" stroke-width="1.5"/>
<!-- mouth -->
<path d="M1666,738 q20,10 40,4 q-2,18 -20,20 q-16,0 -20,-24z" fill="#c51f35"/>
<path d="M1667,739 q20,9 38,3 l-1,6 q-18,4 -35,-3z" fill="#fff"/>
<!-- helmet -->
<path d="M1634,657 q4,-8 28,-14 q12,-26 46,-27 q42,0 50,38 q3,14 1,28 q3,6 -1,10 q-34,-3 -64,-11 q-32,-8 -60,-24z" fill="#e2c12b"/>
<path d="M1662,660 q36,18 92,24 l4,-16 q-2,-24 -22,-32 q8,16 6,30 q-40,-2 -80,-14z" fill="#d6b11f"/>
<path d="M1660,643 q10,-20 40,-24 q-20,10 -26,26z" fill="#ecd24a"/>
</g>
</g>
<g id="footsym"><rect x="481" y="898.5" width="1280" height="38" fill="#525f5f"/><path d="M481,899 H1761" stroke="#4c6070" stroke-width="1"/><path d="M481,936 H1761" stroke="#3f5068" stroke-width="1"/>
<text x="721.0" y="925.3" font-size="20.35" font-family="Liberation Sans" font-weight="bold" fill="#fff" textLength="252.5" lengthAdjust="spacingAndGlyphs" >TEMPLATE INI GRATIS BAGI SUBSCRIBER CHANNEL</text>
<text x="978.0" y="925.3" font-size="20.35" font-family="Liberation Sans" font-weight="bold" fill="#ffff00" textLength="83.0" lengthAdjust="spacingAndGlyphs" >(EKO.RISDIANTO)</text>
<rect x="1062.5" y="922.5" width="2.5" height="2.8" fill="#fff"/>
<text x="1072.0" y="925.3" font-size="20.35" font-family="Liberation Sans" font-weight="bold" fill="#fff" textLength="118.0" lengthAdjust="spacingAndGlyphs" >BAGI YANG BELUM KLIK</text>
<text x="1194.0" y="925.3" font-size="20.35" font-family="Liberation Sans" font-weight="bold" fill="#ffff00" textLength="32.0" lengthAdjust="spacingAndGlyphs" >DISINI</text>
<path d="M1194,927.5 H1226" stroke="#ffff00" stroke-width="1"/><path d="M978,927.5 H1061" stroke="#ffff00" stroke-width="1"/>
<text x="1235.0" y="925.3" font-size="20.35" font-family="Liberation Sans" font-weight="bold" fill="#fff" textLength="285.5" lengthAdjust="spacingAndGlyphs" >DAN DAPATKAN TUTORIAL DAN FREE TEMPLATE LAINNYA.</text>
<path d="M773,928.5 L774.5,927.5 L776.0,928.5 L777.5,927.5 L779.0,928.5 L780.5,927.5 L782.0,928.5 L783.5,927.5 L785.0,928.5 L786.5,927.5 L788.0,928.5 L789.5,927.5 L791.0,928.5" fill="none" stroke="#e22" stroke-width="0.7"/><path d="M832,928.5 L833.5,927.5 L835.0,928.5 L836.5,927.5 L838.0,928.5 L839.5,927.5 L841.0,928.5 L842.5,927.5 L844.0,928.5 L845.5,927.5 L847.0,928.5 L848.5,927.5 L850.0,928.5 L851.5,927.5 L853.0,928.5" fill="none" stroke="#e22" stroke-width="0.7"/><path d="M980,928.5 L981.5,927.5 L983.0,928.5 L984.5,927.5 L986.0,928.5 L987.5,927.5 L989.0,928.5 L990.5,927.5 L992.0,928.5 L993.5,927.5 L995.0,928.5 L996.5,927.5 L998.0,928.5 L999.5,927.5 L1001.0,928.5 L1002.5,927.5 L1004.0,928.5 L1005.5,927.5 L1007.0,928.5 L1008.5,927.5 L1010.0,928.5 L1011.5,927.5 L1013.0,928.5 L1014.5,927.5 L1016.0,928.5 L1017.5,927.5 L1019.0,928.5 L1020.5,927.5 L1022.0,928.5 L1023.5,927.5 L1025.0,928.5 L1026.5,927.5 L1028.0,928.5 L1029.5,927.5 L1031.0,928.5 L1032.5,927.5 L1034.0,928.5 L1035.5,927.5 L1037.0,928.5 L1038.5,927.5 L1040.0,928.5 L1041.5,927.5 L1043.0,928.5 L1044.5,927.5 L1046.0,928.5 L1047.5,927.5 L1049.0,928.5 L1050.5,927.5 L1052.0,928.5 L1053.5,927.5 L1055.0,928.5 L1056.5,927.5 L1058.0,928.5 L1059.5,927.5 L1061.0,928.5" fill="none" stroke="#e22" stroke-width="0.7"/><path d="M1072,928.5 L1073.5,927.5 L1075.0,928.5 L1076.5,927.5 L1078.0,928.5 L1079.5,927.5 L1081.0,928.5 L1082.5,927.5 L1084.0,928.5 L1085.5,927.5 L1087.0,928.5 L1088.5,927.5 L1090.0,928.5 L1091.5,927.5 L1093.0,928.5" fill="none" stroke="#e22" stroke-width="0.7"/><path d="M1131,928.5 L1132.5,927.5 L1134.0,928.5 L1135.5,927.5 L1137.0,928.5 L1138.5,927.5 L1140.0,928.5 L1141.5,927.5 L1143.0,928.5 L1144.5,927.5 L1146.0,928.5 L1147.5,927.5 L1149.0,928.5 L1150.5,927.5 L1152.0,928.5 L1153.5,927.5 L1155.0,928.5 L1156.5,927.5 L1158.0,928.5" fill="none" stroke="#e22" stroke-width="0.7"/><path d="M1162,928.5 L1163.5,927.5 L1165.0,928.5 L1166.5,927.5 L1168.0,928.5 L1169.5,927.5 L1171.0,928.5 L1172.5,927.5 L1174.0,928.5 L1175.5,927.5 L1177.0,928.5 L1178.5,927.5 L1180.0,928.5 L1181.5,927.5 L1183.0,928.5 L1184.5,927.5 L1186.0,928.5 L1187.5,927.5 L1189.0,928.5 L1190.5,927.5" fill="none" stroke="#e22" stroke-width="0.7"/><path d="M1247,928.5 L1248.5,927.5 L1250.0,928.5 L1251.5,927.5 L1253.0,928.5 L1254.5,927.5 L1256.0,928.5 L1257.5,927.5 L1259.0,928.5 L1260.5,927.5 L1262.0,928.5 L1263.5,927.5 L1265.0,928.5 L1266.5,927.5 L1268.0,928.5 L1269.5,927.5 L1271.0,928.5 L1272.5,927.5 L1274.0,928.5 L1275.5,927.5 L1277.0,928.5 L1278.5,927.5 L1280.0,928.5 L1281.5,927.5 L1283.0,928.5 L1284.5,927.5 L1286.0,928.5 L1287.5,927.5 L1289.0,928.5 L1290.5,927.5 L1292.0,928.5 L1293.5,927.5 L1295.0,928.5 L1296.5,927.5 L1298.0,928.5 L1299.5,927.5 L1301.0,928.5 L1302.5,927.5 L1304.0,928.5" fill="none" stroke="#e22" stroke-width="0.7"/><path d="M1452,928.5 L1453.5,927.5 L1455.0,928.5 L1456.5,927.5 L1458.0,928.5 L1459.5,927.5 L1461.0,928.5 L1462.5,927.5 L1464.0,928.5 L1465.5,927.5 L1467.0,928.5 L1468.5,927.5 L1470.0,928.5 L1471.5,927.5 L1473.0,928.5 L1474.5,927.5 L1476.0,928.5 L1477.5,927.5 L1479.0,928.5 L1480.5,927.5 L1482.0,928.5 L1483.5,927.5 L1485.0,928.5 L1486.5,927.5 L1488.0,928.5 L1489.5,927.5 L1491.0,928.5 L1492.5,927.5 L1494.0,928.5 L1495.5,927.5 L1497.0,928.5 L1498.5,927.5 L1500.0,928.5 L1501.5,927.5 L1503.0,928.5 L1504.5,927.5 L1506.0,928.5" fill="none" stroke="#e22" stroke-width="0.7"/></g>
<g id="item1"><path d="M903,452 H965 L992,491.5 L965,528 H903" fill="#f7f7f7" fill-opacity="0.5" stroke="#1a1a1a" stroke-width="1"/><path d="M903,458 H962 L985,491.5 L962,523 H903 Z" fill="url(#bab1)"/>
<g filter="url(#sh2)"><circle cx="848" cy="491.5" r="67" fill="url(#big1)" stroke="#fbf8ef" stroke-width="2"/></g>
<g filter="url(#sh)"><path d="M558,441.5 H848 A50,50 0 0 1 848,541.5 H558 A28,28 0 0 1 530,513.5 V469.5 A28,28 0 0 1 558,441.5 Z" fill="#575757"/></g>
<path d="M564,450.5 H847 A40.5,40.5 0 0 1 847,531.5 H564 A24,24 0 0 1 540,507.5 V474.5 A24,24 0 0 1 564,450.5 Z" fill="#fff"/>
<g filter="url(#sh)"><circle cx="848" cy="491.5" r="33.5" fill="url(#num1)" stroke="#fff" stroke-width="2"/></g>
<text x="930.0" y="501.5" font-size="33.43" font-family="Liberation Sans" font-weight="bold" fill="#fff" textLength="36.0" lengthAdjust="spacingAndGlyphs" filter="url(#tsh)">BAB</text>
<text x="836.5" y="503.0" font-size="31.25" font-family="Liberation Sans" font-weight="bold" fill="#fff" textLength="20.5" lengthAdjust="spacingAndGlyphs" filter="url(#tsh)">01</text>
<text x="706.0" y="484.5" font-size="25.44" font-family="Liberation Sans" font-weight="bold" fill="#111" textLength="98.0" lengthAdjust="spacingAndGlyphs" >PENDAHULUAN</text>
<path d="M614,489.5 H804" stroke="#6b6b6b" stroke-width="1"/>
<text x="640.0" y="502.5" font-size="8.3" font-family="Liberation Sans" fill="#3a3a3a" textLength="170" lengthAdjust="spacingAndGlyphs">Lorem ipsum dolor sit amet, consectetuer adipiscing</text>
<text x="662.0" y="512.6" font-size="8.3" font-family="Liberation Sans" fill="#3a3a3a" textLength="148" lengthAdjust="spacingAndGlyphs">elit. Maecenas porttitor congue massa. Fusce</text>
<text x="681.0" y="522.7" font-size="8.3" font-family="Liberation Sans" fill="#3a3a3a" textLength="129" lengthAdjust="spacingAndGlyphs">posuere, magna sed pulvinar ultricies,</text>
<g fill="#12a6ea">
<path d="M569,477.5 q0,-10.5 9,-10.5 q9,0 9,10.5z"/><rect x="567" y="476.8" width="22" height="2.6" rx="1"/>
<path d="M569,481 h18.5 q0,10.5 -9.25,10.5 q-9.25,0 -9.25,-10.5z"/>
<path d="M559.5,512.8 v-11 q0,-4 4,-5 q7,-2.5 14.5,-2.5 q7,0 13,2.5 q5.5,2.5 5.5,7 v9z"/>
<path d="M559.2,488.3 h8.6 v2.5 q0,3.5 -4.3,3.5 q-4.3,0 -4.3,-3.5z"/><rect x="560.6" y="484.3" width="1.8" height="4.5"/><rect x="564.6" y="484.3" width="1.8" height="4.5"/>
</g>
<path d="M563.6,493 v10.5 h8.6 v14" fill="none" stroke="#fff" stroke-width="4.6" stroke-linejoin="round"/>
<path d="M563.6,493 v10.5 h8.6 v14" fill="none" stroke="#12a6ea" stroke-width="2" stroke-linejoin="round"/>
<path d="M577,468 l-1,6 l2,0 l-1,3" fill="none" stroke="#fff" stroke-width="0.8"/></g><g id="item2"><path d="M1082,538 H1020 L988,577 L1020,615 H1082" fill="#f7f7f7" fill-opacity="0.5" stroke="#1a1a1a" stroke-width="1"/><path d="M1082,543 H1016 L996,577 L1016,609 H1082 Z" fill="url(#bab2)"/>
<g filter="url(#sh2)"><circle cx="1131.5" cy="577" r="67" fill="url(#big2)" stroke="#fff" stroke-width="2.5"/></g>
<g filter="url(#sh)"><path d="M1131.5,527 H1422 A28,28 0 0 1 1450,555 V598 A28,28 0 0 1 1422,626 H1131.5 A49.5,49.5 0 0 1 1131.5,527 Z" fill="#575757"/></g>
<path d="M1132.5,536 H1416 A24,24 0 0 1 1440,560 V592 A24,24 0 0 1 1416,616 H1132.5 A40,40 0 0 1 1132.5,536 Z" fill="#fff"/>
<g filter="url(#sh)"><circle cx="1131.5" cy="577" r="33" fill="url(#num2)" stroke="#fff" stroke-width="2"/></g>
<text x="1015.0" y="586.5" font-size="32.70" font-family="Liberation Sans" font-weight="bold" fill="#fff" textLength="36.5" lengthAdjust="spacingAndGlyphs" filter="url(#tsh)">BAB</text>
<text x="1124.0" y="589.5" font-size="30.52" font-family="Liberation Sans" font-weight="bold" fill="#fff" textLength="22.5" lengthAdjust="spacingAndGlyphs" filter="url(#tsh)">02</text>
<text x="1174.0" y="569.0" font-size="24.71" font-family="Liberation Sans" font-weight="bold" fill="#111" textLength="129.0" lengthAdjust="spacingAndGlyphs" >TINJAUAN PUSTAKA</text>
<path d="M1174,574.5 H1366" stroke="#6b6b6b" stroke-width="1"/>
<text x="1174.0" y="587.0" font-size="8.3" font-family="Liberation Sans" fill="#3a3a3a" textLength="170" lengthAdjust="spacingAndGlyphs">Lorem ipsum dolor sit amet, consectetuer adipiscing</text>
<text x="1174.0" y="597.1" font-size="8.3" font-family="Liberation Sans" fill="#3a3a3a" textLength="148" lengthAdjust="spacingAndGlyphs">elit. Maecenas porttitor congue massa. Fusce</text>
<text x="1174.0" y="607.2" font-size="8.3" font-family="Liberation Sans" fill="#3a3a3a" textLength="129" lengthAdjust="spacingAndGlyphs">posuere, magna sed pulvinar ultricies,</text>
<g filter="url(#ish)">
<path d="M1379.5,571.5 L1403.7,549.5 L1421,566" fill="none" stroke="#f7b500" stroke-width="2.6" stroke-linejoin="round"/>
<path d="M1417,565 q9,1.5 9,7 q0,6 -9,7 z" fill="#f7b500"/>
<rect x="1378" y="572.3" width="32.5" height="9.4" rx="1" fill="#f7b500"/>
<rect x="1396.1" y="563.3" width="11.8" height="9" rx="1.5" fill="none" stroke="#f7b500" stroke-width="2.4"/>
<rect x="1376.3" y="584.5" width="35.9" height="9.5" rx="4.75" fill="#f7b500"/>
<g fill="#f5d27a"><circle cx="1380.8" cy="589.2" r="1.3"/><circle cx="1387.3" cy="589.2" r="1.3"/><circle cx="1393.8" cy="589.2" r="1.3"/><circle cx="1400.4" cy="589.2" r="1.3"/><circle cx="1406.8" cy="589.2" r="1.3"/></g>
</g></g><g id="item3"><path d="M903,632 H965 L992,671 L965,708 H903" fill="#f7f7f7" fill-opacity="0.5" stroke="#1a1a1a" stroke-width="1"/><path d="M903,638 H962 L985,671 L962,703 H903 Z" fill="url(#bab3)"/>
<g filter="url(#sh2)"><circle cx="846" cy="671.5" r="67" fill="url(#big3)" stroke="#fbf8ef" stroke-width="2"/></g>
<g filter="url(#sh)"><path d="M558,621.5 H846 A50,50 0 0 1 846,721.5 H558 A28,28 0 0 1 530,693.5 V649.5 A28,28 0 0 1 558,621.5 Z" fill="#575757"/></g>
<path d="M564,630.5 H845 A40.5,40.5 0 0 1 845,711.5 H564 A24,24 0 0 1 540,687.5 V654.5 A24,24 0 0 1 564,630.5 Z" fill="#fff"/>
<g filter="url(#sh)"><circle cx="846" cy="671.5" r="33.5" fill="url(#num3)" stroke="#fff" stroke-width="2"/></g>
<text x="927.0" y="681.5" font-size="33.43" font-family="Liberation Sans" font-weight="bold" fill="#fff" textLength="37.0" lengthAdjust="spacingAndGlyphs" filter="url(#tsh)">BAB</text>
<text x="835.0" y="684.0" font-size="31.98" font-family="Liberation Sans" font-weight="bold" fill="#fff" textLength="24.0" lengthAdjust="spacingAndGlyphs" filter="url(#tsh)">03</text>
<text x="704.0" y="664.0" font-size="24.71" font-family="Liberation Sans" font-weight="bold" fill="#111" textLength="84.0" lengthAdjust="spacingAndGlyphs" >METODOLOGI</text>
<path d="M612.5,669.5 H802" stroke="#6b6b6b" stroke-width="1"/>
<text x="623.0" y="678.5" font-size="8.3" font-family="Liberation Sans" fill="#3a3a3a" textLength="170" lengthAdjust="spacingAndGlyphs">Lorem ipsum dolor sit amet, consectetuer adipiscing</text>
<text x="645.0" y="688.6" font-size="8.3" font-family="Liberation Sans" fill="#3a3a3a" textLength="148" lengthAdjust="spacingAndGlyphs">elit. Maecenas porttitor congue massa. Fusce</text>
<text x="664.0" y="698.7" font-size="8.3" font-family="Liberation Sans" fill="#3a3a3a" textLength="129" lengthAdjust="spacingAndGlyphs">posuere, magna sed pulvinar ultricies,</text>
<g fill="#b462ca">
<path d="M559,664 v-7 q0,-1.5 1.5,-1.5 h7.5 q1.8,0 2.4,1.6 l2.6,7" fill="none" stroke="#b462ca" stroke-width="2"/>
<path d="M555.5,663.8 h28.5 q1.5,0 1.7,1.5 l0.8,6.6 l-15.5,-4.5 q-3,-0.8 -6,0.5 l-10.5,5.5 q-0.5,-8 0,-8z"/>
<path d="M556,683.6 q-3.5,0 -3,-3.5 q0.5,-2 2.5,-3 l13,-6.5 q2.2,-1 4.4,-0.2 l16.5,6 q2.5,1 2.5,3.5 q0,3.7 -3.5,3.7z"/>
<path d="M590.5,665.6 l8.2,1.7 l6.1,15.4 l-11.3,-0.7 q-3.5,-8 -3,-16.4z"/>
</g>
<g fill="#fff"><circle cx="557.3" cy="680" r="1.5"/><circle cx="570" cy="673.7" r="1.5"/><circle cx="589.2" cy="680" r="1.5"/></g></g><g id="item4"><path d="M1082,722 H1020 L988,761 L1020,798 H1082" fill="#f7f7f7" fill-opacity="0.5" stroke="#1a1a1a" stroke-width="1"/><path d="M1082,727 H1016 L996,761 L1016,792 H1082 Z" fill="url(#bab4)"/>
<g filter="url(#sh2)"><circle cx="1134" cy="761" r="67" fill="url(#big4)" stroke="#fff" stroke-width="2.5"/></g>
<g filter="url(#sh)"><path d="M1134,711 H1422 A28,28 0 0 1 1450,739 V782 A28,28 0 0 1 1422,810 H1134 A49.5,49.5 0 0 1 1134,711 Z" fill="#575757"/></g>
<path d="M1135,720 H1416 A24,24 0 0 1 1440,744 V776 A24,24 0 0 1 1416,800 H1135 A40,40 0 0 1 1135,720 Z" fill="#fff"/>
<g filter="url(#sh)"><circle cx="1134" cy="761" r="33" fill="url(#num4)" stroke="#fff" stroke-width="2"/></g>
<text x="1017.0" y="769.5" font-size="32.70" font-family="Liberation Sans" font-weight="bold" fill="#fff" textLength="36.0" lengthAdjust="spacingAndGlyphs" filter="url(#tsh)">BAB</text>
<text x="1125.5" y="773.0" font-size="31.98" font-family="Liberation Sans" font-weight="bold" fill="#fff" textLength="24.0" lengthAdjust="spacingAndGlyphs" filter="url(#tsh)">04</text>
<text x="1176.5" y="753.0" font-size="23.98" font-family="Liberation Sans" font-weight="bold" fill="#111" textLength="165.5" lengthAdjust="spacingAndGlyphs" >HASIL DAN PEMBAHASAN</text>
<path d="M1176,758.5 H1368" stroke="#6b6b6b" stroke-width="1"/>
<text x="1177.0" y="771.0" font-size="8.3" font-family="Liberation Sans" fill="#3a3a3a" textLength="170" lengthAdjust="spacingAndGlyphs">Lorem ipsum dolor sit amet, consectetuer adipiscing</text>
<text x="1177.0" y="781.1" font-size="8.3" font-family="Liberation Sans" fill="#3a3a3a" textLength="148" lengthAdjust="spacingAndGlyphs">elit. Maecenas porttitor congue massa. Fusce</text>
<text x="1177.0" y="791.2" font-size="8.3" font-family="Liberation Sans" fill="#3a3a3a" textLength="129" lengthAdjust="spacingAndGlyphs">posuere, magna sed pulvinar ultricies,</text>
<g fill="none" stroke="#5cc35a" stroke-width="3" transform="translate(1380.5,739.5)">
<path d="M0,6 h48 M4,6 v24 h40 v-24 M24,0 v6 M24,30 v17 M24,31 l-12,14 M24,31 l12,14"/></g>
<g fill="#5cc35a" transform="translate(1380.5,739.5)"><rect x="14" y="18" width="5" height="9"/><rect x="21" y="14" width="5" height="13"/><rect x="28" y="9" width="5" height="18"/></g></g><g id="item5"><path d="M903,812 H965 L992,851 L965,888 H903" fill="#f7f7f7" fill-opacity="0.5" stroke="#1a1a1a" stroke-width="1"/><path d="M903,818 H962 L985,851 L962,883 H903 Z" fill="url(#bab5)"/>
<g filter="url(#sh2)"><circle cx="846" cy="851.5" r="67" fill="url(#big5)" stroke="#fbf8ef" stroke-width="2"/></g>
<g filter="url(#sh)"><path d="M558,801.5 H846 A50,50 0 0 1 846,901.5 H558 A28,28 0 0 1 530,873.5 V829.5 A28,28 0 0 1 558,801.5 Z" fill="#575757"/></g>
<path d="M564,810.5 H845 A40.5,40.5 0 0 1 845,891.5 H564 A24,24 0 0 1 540,867.5 V834.5 A24,24 0 0 1 564,810.5 Z" fill="#fff"/>
<g filter="url(#sh)"><circle cx="846" cy="851.5" r="33.5" fill="url(#num5)" stroke="#fff" stroke-width="2"/></g>
<text x="927.0" y="861.5" font-size="33.43" font-family="Liberation Sans" font-weight="bold" fill="#fff" textLength="37.0" lengthAdjust="spacingAndGlyphs" filter="url(#tsh)">BAB</text>
<text x="835.0" y="863.5" font-size="31.98" font-family="Liberation Sans" font-weight="bold" fill="#fff" textLength="24.0" lengthAdjust="spacingAndGlyphs" filter="url(#tsh)">05</text>
<text x="720.5" y="841.0" font-size="23.98" font-family="Liberation Sans" font-weight="bold" fill="#111" textLength="67.5" lengthAdjust="spacingAndGlyphs" >SIMPULAN</text>
<path d="M612.5,849.5 H802" stroke="#6b6b6b" stroke-width="1"/>
<text x="618.0" y="864.0" font-size="8.3" font-family="Liberation Sans" fill="#3a3a3a" textLength="170" lengthAdjust="spacingAndGlyphs">Lorem ipsum dolor sit amet, consectetuer adipiscing</text>
<text x="640.0" y="874.1" font-size="8.3" font-family="Liberation Sans" fill="#3a3a3a" textLength="148" lengthAdjust="spacingAndGlyphs">elit. Maecenas porttitor congue massa. Fusce</text>
<text x="659.0" y="884.2" font-size="8.3" font-family="Liberation Sans" fill="#3a3a3a" textLength="129" lengthAdjust="spacingAndGlyphs">posuere, magna sed pulvinar ultricies,</text>
<g fill="none" stroke="#f02a1c">
<path d="M590.10,842.97 A20.5,20.5 0 1 1 582.36,832.51" stroke-width="3.4"/><path d="M582.78,847.59 A12.3,12.3 0 1 1 574.40,837.60" stroke-width="3"/>
<path d="M570.6,849.3 L588,832" stroke-width="2.6"/></g>
<g fill="#f02a1c"><circle cx="570.6" cy="849.3" r="5.7"/>
<path d="M583.5,833 l0,-6 l4,-4 l1.5,5 l5,1.5 l-4,4 z"/></g></g>
</defs>
<g id="slide1">
<use href="#bgsym"/>
<path d="M1079,278.5 V260.5 H509.5 V363.5 H1079 V347" fill="none" stroke="#6f6b6d" stroke-width="3"/>
<text x="568.0" y="332.5" font-size="50.87" font-family="Liberation Sans" font-weight="bold" fill="#1f3864" textLength="598.0" lengthAdjust="spacingAndGlyphs" >JUDUL TUGAS /PENELITIAN ANDA TULIS DISINI</text>
<use href="#logosym"/>
<g stroke="#7b7b7b" stroke-width="3" fill="none"><path d="M604,580 L953,578"/><path d="M1028,671 L1364,671"/><path d="M606,760 L951,758"/><path d="M1023,847 L1366,847"/><path d="M1027,500 L953,578 L1029,670 L951,758 L1023,846"/></g>
<use href="#item1"/>
<use href="#item3"/>
<use href="#item5"/>
<use href="#item2"/>
<use href="#item4"/>
<g filter="url(#sh)"><path d="M1024.3,476.2 L1024.5,469.6 L1032.5,470.0 L1032.1,476.5 L1036.6,478.0 L1040.1,472.4 L1046.8,476.8 L1043.1,482.2 L1046.3,485.7 L1052.1,482.7 L1055.7,489.8 L1049.8,492.6 L1050.8,497.3 L1057.4,497.5 L1057.0,505.5 L1050.5,505.1 L1049.0,509.6 L1054.6,513.1 L1050.2,519.8 L1044.8,516.1 L1041.3,519.3 L1044.3,525.1 L1037.2,528.7 L1034.4,522.8 L1029.7,523.8 L1029.5,530.4 L1021.5,530.0 L1021.9,523.5 L1017.4,522.0 L1013.9,527.6 L1007.2,523.2 L1010.9,517.8 L1007.7,514.3 L1001.9,517.3 L998.3,510.2 L1004.2,507.4 L1003.2,502.7 L996.6,502.5 L997.0,494.5 L1003.5,494.9 L1005.0,490.4 L999.4,486.9 L1003.8,480.2 L1009.2,483.9 L1012.7,480.7 L1009.7,474.9 L1016.8,471.3 L1019.6,477.2Z" fill="url(#gBody)"/></g>
<circle cx="1027" cy="500" r="18.2" fill="url(#gRing)"/>
<circle cx="1027" cy="500" r="13.5" fill="#0aa8ec"/>
<circle cx="1027" cy="500" r="13.5" fill="none" stroke="#000" stroke-opacity="0.12" stroke-width="1.5"/>
<g filter="url(#sh)"><path d="M601.3,555.2 L601.5,548.6 L609.5,549.0 L609.1,555.5 L613.6,557.0 L617.1,551.4 L623.8,555.8 L620.1,561.2 L623.3,564.7 L629.1,561.7 L632.7,568.8 L626.8,571.6 L627.8,576.3 L634.4,576.5 L634.0,584.5 L627.5,584.1 L626.0,588.6 L631.6,592.1 L627.2,598.8 L621.8,595.1 L618.3,598.3 L621.3,604.1 L614.2,607.7 L611.4,601.8 L606.7,602.8 L606.5,609.4 L598.5,609.0 L598.9,602.5 L594.4,601.0 L590.9,606.6 L584.2,602.2 L587.9,596.8 L584.7,593.3 L578.9,596.3 L575.3,589.2 L581.2,586.4 L580.2,581.7 L573.6,581.5 L574.0,573.5 L580.5,573.9 L582.0,569.4 L576.4,565.9 L580.8,559.2 L586.2,562.9 L589.7,559.7 L586.7,553.9 L593.8,550.3 L596.6,556.2Z" fill="url(#gBody)"/></g>
<circle cx="604" cy="579" r="18.2" fill="url(#gRing)"/>
<circle cx="604" cy="579" r="13.5" fill="#f2e20a"/>
<circle cx="604" cy="579" r="13.5" fill="none" stroke="#000" stroke-opacity="0.12" stroke-width="1.5"/>
<g filter="url(#sh)"><path d="M950.8,554.2 L951.0,547.6 L959.0,548.0 L958.6,554.5 L963.1,556.0 L966.6,550.4 L973.3,554.8 L969.6,560.2 L972.8,563.7 L978.6,560.7 L982.2,567.8 L976.3,570.6 L977.3,575.3 L983.9,575.5 L983.5,583.5 L977.0,583.1 L975.5,587.6 L981.1,591.1 L976.7,597.8 L971.3,594.1 L967.8,597.3 L970.8,603.1 L963.7,606.7 L960.9,600.8 L956.2,601.8 L956.0,608.4 L948.0,608.0 L948.4,601.5 L943.9,600.0 L940.4,605.6 L933.7,601.2 L937.4,595.8 L934.2,592.3 L928.4,595.3 L924.8,588.2 L930.7,585.4 L929.7,580.7 L923.1,580.5 L923.5,572.5 L930.0,572.9 L931.5,568.4 L925.9,564.9 L930.3,558.2 L935.7,561.9 L939.2,558.7 L936.2,552.9 L943.3,549.3 L946.1,555.2Z" fill="url(#gBody)"/></g>
<circle cx="953.5" cy="578" r="18.2" fill="url(#gRing)"/>
<circle cx="953.5" cy="578" r="13.5" fill="#f2e20a"/>
<circle cx="953.5" cy="578" r="13.5" fill="none" stroke="#000" stroke-opacity="0.12" stroke-width="1.5"/>
<g filter="url(#sh)"><path d="M1026.3,646.2 L1026.5,639.6 L1034.5,640.0 L1034.1,646.5 L1038.6,648.0 L1042.1,642.4 L1048.8,646.8 L1045.1,652.2 L1048.3,655.7 L1054.1,652.7 L1057.7,659.8 L1051.8,662.6 L1052.8,667.3 L1059.4,667.5 L1059.0,675.5 L1052.5,675.1 L1051.0,679.6 L1056.6,683.1 L1052.2,689.8 L1046.8,686.1 L1043.3,689.3 L1046.3,695.1 L1039.2,698.7 L1036.4,692.8 L1031.7,693.8 L1031.5,700.4 L1023.5,700.0 L1023.9,693.5 L1019.4,692.0 L1015.9,697.6 L1009.2,693.2 L1012.9,687.8 L1009.7,684.3 L1003.9,687.3 L1000.3,680.2 L1006.2,677.4 L1005.2,672.7 L998.6,672.5 L999.0,664.5 L1005.5,664.9 L1007.0,660.4 L1001.4,656.9 L1005.8,650.2 L1011.2,653.9 L1014.7,650.7 L1011.7,644.9 L1018.8,641.3 L1021.6,647.2Z" fill="url(#gBody)"/></g>
<circle cx="1029" cy="670" r="18.2" fill="url(#gRing)"/>
<circle cx="1029" cy="670" r="13.5" fill="#a24fbf"/>
<circle cx="1029" cy="670" r="13.5" fill="none" stroke="#000" stroke-opacity="0.12" stroke-width="1.5"/>
<g filter="url(#sh)"><path d="M1361.3,646.2 L1361.5,639.6 L1369.5,640.0 L1369.1,646.5 L1373.6,648.0 L1377.1,642.4 L1383.8,646.8 L1380.1,652.2 L1383.3,655.7 L1389.1,652.7 L1392.7,659.8 L1386.8,662.6 L1387.8,667.3 L1394.4,667.5 L1394.0,675.5 L1387.5,675.1 L1386.0,679.6 L1391.6,683.1 L1387.2,689.8 L1381.8,686.1 L1378.3,689.3 L1381.3,695.1 L1374.2,698.7 L1371.4,692.8 L1366.7,693.8 L1366.5,700.4 L1358.5,700.0 L1358.9,693.5 L1354.4,692.0 L1350.9,697.6 L1344.2,693.2 L1347.9,687.8 L1344.7,684.3 L1338.9,687.3 L1335.3,680.2 L1341.2,677.4 L1340.2,672.7 L1333.6,672.5 L1334.0,664.5 L1340.5,664.9 L1342.0,660.4 L1336.4,656.9 L1340.8,650.2 L1346.2,653.9 L1349.7,650.7 L1346.7,644.9 L1353.8,641.3 L1356.6,647.2Z" fill="url(#gBody)"/></g>
<circle cx="1364" cy="670" r="18.2" fill="url(#gRing)"/>
<circle cx="1364" cy="670" r="13.5" fill="#a24fbf"/>
<circle cx="1364" cy="670" r="13.5" fill="none" stroke="#000" stroke-opacity="0.12" stroke-width="1.5"/>
<g filter="url(#sh)"><path d="M603.3,736.2 L603.5,729.6 L611.5,730.0 L611.1,736.5 L615.6,738.0 L619.1,732.4 L625.8,736.8 L622.1,742.2 L625.3,745.7 L631.1,742.7 L634.7,749.8 L628.8,752.6 L629.8,757.3 L636.4,757.5 L636.0,765.5 L629.5,765.1 L628.0,769.6 L633.6,773.1 L629.2,779.8 L623.8,776.1 L620.3,779.3 L623.3,785.1 L616.2,788.7 L613.4,782.8 L608.7,783.8 L608.5,790.4 L600.5,790.0 L600.9,783.5 L596.4,782.0 L592.9,787.6 L586.2,783.2 L589.9,777.8 L586.7,774.3 L580.9,777.3 L577.3,770.2 L583.2,767.4 L582.2,762.7 L575.6,762.5 L576.0,754.5 L582.5,754.9 L584.0,750.4 L578.4,746.9 L582.8,740.2 L588.2,743.9 L591.7,740.7 L588.7,734.9 L595.8,731.3 L598.6,737.2Z" fill="url(#gBody)"/></g>
<circle cx="606" cy="760" r="18.2" fill="url(#gRing)"/>
<circle cx="606" cy="760" r="13.5" fill="#45b040"/>
<circle cx="606" cy="760" r="13.5" fill="none" stroke="#000" stroke-opacity="0.12" stroke-width="1.5"/>
<g filter="url(#sh)"><path d="M948.8,734.2 L949.0,727.6 L957.0,728.0 L956.6,734.5 L961.1,736.0 L964.6,730.4 L971.3,734.8 L967.6,740.2 L970.8,743.7 L976.6,740.7 L980.2,747.8 L974.3,750.6 L975.3,755.3 L981.9,755.5 L981.5,763.5 L975.0,763.1 L973.5,767.6 L979.1,771.1 L974.7,777.8 L969.3,774.1 L965.8,777.3 L968.8,783.1 L961.7,786.7 L958.9,780.8 L954.2,781.8 L954.0,788.4 L946.0,788.0 L946.4,781.5 L941.9,780.0 L938.4,785.6 L931.7,781.2 L935.4,775.8 L932.2,772.3 L926.4,775.3 L922.8,768.2 L928.7,765.4 L927.7,760.7 L921.1,760.5 L921.5,752.5 L928.0,752.9 L929.5,748.4 L923.9,744.9 L928.3,738.2 L933.7,741.9 L937.2,738.7 L934.2,732.9 L941.3,729.3 L944.1,735.2Z" fill="url(#gBody)"/></g>
<circle cx="951.5" cy="758" r="18.2" fill="url(#gRing)"/>
<circle cx="951.5" cy="758" r="13.5" fill="#45b040"/>
<circle cx="951.5" cy="758" r="13.5" fill="none" stroke="#000" stroke-opacity="0.12" stroke-width="1.5"/>
<g filter="url(#sh)"><path d="M1019.8,822.7 L1020.0,816.1 L1028.0,816.5 L1027.6,823.0 L1032.1,824.5 L1035.6,818.9 L1042.3,823.3 L1038.6,828.7 L1041.8,832.2 L1047.6,829.2 L1051.2,836.3 L1045.3,839.1 L1046.3,843.8 L1052.9,844.0 L1052.5,852.0 L1046.0,851.6 L1044.5,856.1 L1050.1,859.6 L1045.7,866.3 L1040.3,862.6 L1036.8,865.8 L1039.8,871.6 L1032.7,875.2 L1029.9,869.3 L1025.2,870.3 L1025.0,876.9 L1017.0,876.5 L1017.4,870.0 L1012.9,868.5 L1009.4,874.1 L1002.7,869.7 L1006.4,864.3 L1003.2,860.8 L997.4,863.8 L993.8,856.7 L999.7,853.9 L998.7,849.2 L992.1,849.0 L992.5,841.0 L999.0,841.4 L1000.5,836.9 L994.9,833.4 L999.3,826.7 L1004.7,830.4 L1008.2,827.2 L1005.2,821.4 L1012.3,817.8 L1015.1,823.7Z" fill="url(#gBody)"/></g>
<circle cx="1022.5" cy="846.5" r="18.2" fill="url(#gRing)"/>
<circle cx="1022.5" cy="846.5" r="13.5" fill="#e61f16"/>
<circle cx="1022.5" cy="846.5" r="13.5" fill="none" stroke="#000" stroke-opacity="0.12" stroke-width="1.5"/>
<g filter="url(#sh)"><path d="M1364.3,822.7 L1364.5,816.1 L1372.5,816.5 L1372.1,823.0 L1376.6,824.5 L1380.1,818.9 L1386.8,823.3 L1383.1,828.7 L1386.3,832.2 L1392.1,829.2 L1395.7,836.3 L1389.8,839.1 L1390.8,843.8 L1397.4,844.0 L1397.0,852.0 L1390.5,851.6 L1389.0,856.1 L1394.6,859.6 L1390.2,866.3 L1384.8,862.6 L1381.3,865.8 L1384.3,871.6 L1377.2,875.2 L1374.4,869.3 L1369.7,870.3 L1369.5,876.9 L1361.5,876.5 L1361.9,870.0 L1357.4,868.5 L1353.9,874.1 L1347.2,869.7 L1350.9,864.3 L1347.7,860.8 L1341.9,863.8 L1338.3,856.7 L1344.2,853.9 L1343.2,849.2 L1336.6,849.0 L1337.0,841.0 L1343.5,841.4 L1345.0,836.9 L1339.4,833.4 L1343.8,826.7 L1349.2,830.4 L1352.7,827.2 L1349.7,821.4 L1356.8,817.8 L1359.6,823.7Z" fill="url(#gBody)"/></g>
<circle cx="1367" cy="846.5" r="18.2" fill="url(#gRing)"/>
<circle cx="1367" cy="846.5" r="13.5" fill="#e61f16"/>
<circle cx="1367" cy="846.5" r="13.5" fill="none" stroke="#000" stroke-opacity="0.12" stroke-width="1.5"/>
<use href="#engsym"/>
<use href="#footsym"/>
</g>
</svg>
<!-- /SLIDE -->
<!-- PANE -->
<div class="a" style="left:480px;top:237px;width:1282px;height:722px;border:1px solid #c6c6c6"></div>
<div class="a" style="left:290px;top:159px;width:15px;height:858px;background:#dadada;border:1px solid #c8c8c8"></div>
<div class="a" style="left:290px;top:159px;width:15px;height:15px;background:#fff;border:1px solid #ababab"></div>
<div class="a" style="left:290px;top:173px;width:15px;height:648px;background:#fff;border:1px solid #ababab"></div>
<div class="a" style="left:290px;top:1001px;width:15px;height:15px;background:#fff;border:1px solid #ababab"></div>
<svg class="a" style="left:290px;top:159px" width="15" height="858"><path d="M3.5 10h8l-4-4z" fill="#606060"/><path d="M3.5 848h8l-4 4z" fill="#606060"/></svg>
<div class="a" style="left:309px;top:159px;width:1px;height:858px;background:#c8c8c8"></div>
<div class="a" style="left:310px;top:1016px;width:1585px;height:1px;background:#c8c8c8"></div>
<svg class="a" style="left:0;top:0" width="1895" height="1033" viewBox="0 0 1895 1033">
<rect x="483" y="162" width="1278" height="13" fill="#fff"/>
<rect x="317" y="239" width="13" height="717" fill="#fff"/>
<rect x="485.2" y="167" width="1" height="1.2" fill="#777"/>
<rect x="497.2" y="164" width="1" height="6" fill="#555"/>
<rect x="509.2" y="167" width="1" height="1.2" fill="#777"/>
<rect x="521.2" y="167" width="1" height="1.2" fill="#777"/>
<rect x="533.2" y="167" width="1" height="1.2" fill="#777"/>
<text x="545.7" y="172.5" font-size="10.5" text-anchor="middle" fill="#444" font-family="Liberation Sans">6</text>
<rect x="557.2" y="167" width="1" height="1.2" fill="#777"/>
<rect x="569.2" y="167" width="1" height="1.2" fill="#777"/>
<rect x="581.2" y="167" width="1" height="1.2" fill="#777"/>
<rect x="593.2" y="164" width="1" height="6" fill="#555"/>
<rect x="605.2" y="167" width="1" height="1.2" fill="#777"/>
<rect x="617.2" y="167" width="1" height="1.2" fill="#777"/>
<rect x="629.2" y="167" width="1" height="1.2" fill="#777"/>
<text x="641.7" y="172.5" font-size="10.5" text-anchor="middle" fill="#444" font-family="Liberation Sans">5</text>
<rect x="653.2" y="167" width="1" height="1.2" fill="#777"/>
<rect x="665.2" y="167" width="1" height="1.2" fill="#777"/>
<rect x="677.2" y="167" width="1" height="1.2" fill="#777"/>
<rect x="689.2" y="164" width="1" height="6" fill="#555"/>
<rect x="701.2" y="167" width="1" height="1.2" fill="#777"/>
<rect x="713.2" y="167" width="1" height="1.2" fill="#777"/>
<rect x="725.2" y="167" width="1" height="1.2" fill="#777"/>
<text x="737.7" y="172.5" font-size="10.5" text-anchor="middle" fill="#444" font-family="Liberation Sans">4</text>
<rect x="749.2" y="167" width="1" height="1.2" fill="#777"/>
<rect x="761.2" y="167" width="1" height="1.2" fill="#777"/>
<rect x="773.2" y="167" width="1" height="1.2" fill="#777"/>
<rect x="785.2" y="164" width="1" height="6" fill="#555"/>
<rect x="797.2" y="167" width="1" height="1.2" fill="#777"/>
<rect x="809.2" y="167" width="1" height="1.2" fill="#777"/>
<rect x="821.2" y="167" width="1" height="1.2" fill="#777"/>
<text x="833.7" y="172.5" font-size="10.5" text-anchor="middle" fill="#444" font-family="Liberation Sans">3</text>
<rect x="845.2" y="167" width="1" height="1.2" fill="#777"/>
<rect x="857.2" y="167" width="1" height="1.2" fill="#777"/>
<rect x="869.2" y="167" width="1" height="1.2" fill="#777"/>
<rect x="881.2" y="164" width="1" height="6" fill="#555"/>
<rect x="893.2" y="167" width="1" height="1.2" fill="#777"/>
<rect x="905.2" y="167" width="1" height="1.2" fill="#777"/>
<rect x="917.2" y="167" width="1" height="1.2" fill="#777"/>
<text x="929.7" y="172.5" font-size="10.5" text-anchor="middle" fill="#444" font-family="Liberation Sans">2</text>
<rect x="941.2" y="167" width="1" height="1.2" fill="#777"/>
<rect x="953.2" y="167" width="1" height="1.2" fill="#777"/>
<rect x="965.2" y="167" width="1" height="1.2" fill="#777"/>
<rect x="977.2" y="164" width="1" height="6" fill="#555"/>
<rect x="989.2" y="167" width="1" height="1.2" fill="#777"/>
<rect x="1001.2" y="167" width="1" height="1.2" fill="#777"/>
<rect x="1013.2" y="167" width="1" height="1.2" fill="#777"/>
<text x="1025.7" y="172.5" font-size="10.5" text-anchor="middle" fill="#444" font-family="Liberation Sans">1</text>
<rect x="1037.2" y="167" width="1" height="1.2" fill="#777"/>
<rect x="1049.2" y="167" width="1" height="1.2" fill="#777"/>
<rect x="1061.2" y="167" width="1" height="1.2" fill="#777"/>
<rect x="1073.2" y="164" width="1" height="6" fill="#555"/>
<rect x="1085.2" y="167" width="1" height="1.2" fill="#777"/>
<rect x="1097.2" y="167" width="1" height="1.2" fill="#777"/>
<rect x="1109.2" y="167" width="1" height="1.2" fill="#777"/>
<text x="1121.7" y="172.5" font-size="10.5" text-anchor="middle" fill="#444" font-family="Liberation Sans">0</text>
<rect x="1133.2" y="167" width="1" height="1.2" fill="#777"/>
<rect x="1145.2" y="167" width="1" height="1.2" fill="#777"/>
<rect x="1157.2" y="167" width="1" height="1.2" fill="#777"/>
<rect x="1169.2" y="164" width="1" height="6" fill="#555"/>
<rect x="1181.2" y="167" width="1" height="1.2" fill="#777"/>
<rect x="1193.2" y="167" width="1" height="1.2" fill="#777"/>
<rect x="1205.2" y="167" width="1" height="1.2" fill="#777"/>
<text x="1217.7" y="172.5" font-size="10.5" text-anchor="middle" fill="#444" font-family="Liberation Sans">1</text>
<rect x="1229.2" y="167" width="1" height="1.2" fill="#777"/>
<rect x="1241.2" y="167" width="1" height="1.2" fill="#777"/>
<rect x="1253.2" y="167" width="1" height="1.2" fill="#777"/>
<rect x="1265.2" y="164" width="1" height="6" fill="#555"/>
<rect x="1277.2" y="167" width="1" height="1.2" fill="#777"/>
<rect x="1289.2" y="167" width="1" height="1.2" fill="#777"/>
<rect x="1301.2" y="167" width="1" height="1.2" fill="#777"/>
<text x="1313.7" y="172.5" font-size="10.5" text-anchor="middle" fill="#444" font-family="Liberation Sans">2</text>
<rect x="1325.2" y="167" width="1" height="1.2" fill="#777"/>
<rect x="1337.2" y="167" width="1" height="1.2" fill="#777"/>
<rect x="1349.2" y="167" width="1" height="1.2" fill="#777"/>
<rect x="1361.2" y="164" width="1" height="6" fill="#555"/>
<rect x="1373.2" y="167" width="1" height="1.2" fill="#777"/>
<rect x="1385.2" y="167" width="1" height="1.2" fill="#777"/>
<rect x="1397.2" y="167" width="1" height="1.2" fill="#777"/>
<text x="1409.7" y="172.5" font-size="10.5" text-anchor="middle" fill="#444" font-family="Liberation Sans">3</text>
<rect x="1421.2" y="167" width="1" height="1.2" fill="#777"/>
<rect x="1433.2" y="167" width="1" height="1.2" fill="#777"/>
<rect x="1445.2" y="167" width="1" height="1.2" fill="#777"/>
<rect x="1457.2" y="164" width="1" height="6" fill="#555"/>
<rect x="1469.2" y="167" width="1" height="1.2" fill="#777"/>
<rect x="1481.2" y="167" width="1" height="1.2" fill="#777"/>
<rect x="1493.2" y="167" width="1" height="1.2" fill="#777"/>
<text x="1505.7" y="172.5" font-size="10.5" text-anchor="middle" fill="#444" font-family="Liberation Sans">4</text>
<rect x="1517.2" y="167" width="1" height="1.2" fill="#777"/>
<rect x="1529.2" y="167" width="1" height="1.2" fill="#777"/>
<rect x="1541.2" y="167" width="1" height="1.2" fill="#777"/>
<rect x="1553.2" y="164" width="1" height="6" fill="#555"/>
<rect x="1565.2" y="167" width="1" height="1.2" fill="#777"/>
<rect x="1577.2" y="167" width="1" height="1.2" fill="#777"/>
<rect x="1589.2" y="167" width="1" height="1.2" fill="#777"/>
<text x="1601.7" y="172.5" font-size="10.5" text-anchor="middle" fill="#444" font-family="Liberation Sans">5</text>
<rect x="1613.2" y="167" width="1" height="1.2" fill="#777"/>
<rect x="1625.2" y="167" width="1" height="1.2" fill="#777"/>
<rect x="1637.2" y="167" width="1" height="1.2" fill="#777"/>
<rect x="1649.2" y="164" width="1" height="6" fill="#555"/>
<rect x="1661.2" y="167" width="1" height="1.2" fill="#777"/>
<rect x="1673.2" y="167" width="1" height="1.2" fill="#777"/>
<rect x="1685.2" y="167" width="1" height="1.2" fill="#777"/>
<text x="1697.7" y="172.5" font-size="10.5" text-anchor="middle" fill="#444" font-family="Liberation Sans">6</text>
<rect x="1709.2" y="167" width="1" height="1.2" fill="#777"/>
<rect x="1721.2" y="167" width="1" height="1.2" fill="#777"/>
<rect x="1733.2" y="167" width="1" height="1.2" fill="#777"/>
<rect x="1745.2" y="164" width="1" height="6" fill="#555"/>
<rect x="1757.2" y="167" width="1" height="1.2" fill="#777"/>
<rect x="323" y="249.1" width="1.2" height="1" fill="#777"/>
<rect x="320.5" y="261.1" width="6" height="1" fill="#555"/>
<rect x="323" y="273.1" width="1.2" height="1" fill="#777"/>
<rect x="323" y="285.1" width="1.2" height="1" fill="#777"/>
<rect x="323" y="297.1" width="1.2" height="1" fill="#777"/>
<text x="0" y="0" font-size="10.5" text-anchor="middle" fill="#444" font-family="Liberation Sans" transform="translate(327.5 309.6) rotate(-90)">3</text>
<rect x="323" y="321.1" width="1.2" height="1" fill="#777"/>
<rect x="323" y="333.1" width="1.2" height="1" fill="#777"/>
<rect x="323" y="345.1" width="1.2" height="1" fill="#777"/>
<rect x="320.5" y="357.1" width="6" height="1" fill="#555"/>
<rect x="323" y="369.1" width="1.2" height="1" fill="#777"/>
<rect x="323" y="381.1" width="1.2" height="1" fill="#777"/>
<rect x="323" y="393.1" width="1.2" height="1" fill="#777"/>
<text x="0" y="0" font-size="10.5" text-anchor="middle" fill="#444" font-family="Liberation Sans" transform="translate(327.5 405.6) rotate(-90)">2</text>
<rect x="323" y="417.1" width="1.2" height="1" fill="#777"/>
<rect x="323" y="429.1" width="1.2" height="1" fill="#777"/>
<rect x="323" y="441.1" width="1.2" height="1" fill="#777"/>
<rect x="320.5" y="453.1" width="6" height="1" fill="#555"/>
<rect x="323" y="465.1" width="1.2" height="1" fill="#777"/>
<rect x="323" y="477.1" width="1.2" height="1" fill="#777"/>
<rect x="323" y="489.1" width="1.2" height="1" fill="#777"/>
<text x="0" y="0" font-size="10.5" text-anchor="middle" fill="#444" font-family="Liberation Sans" transform="translate(327.5 501.6) rotate(-90)">1</text>
<rect x="323" y="513.1" width="1.2" height="1" fill="#777"/>
<rect x="323" y="525.1" width="1.2" height="1" fill="#777"/>
<rect x="323" y="537.1" width="1.2" height="1" fill="#777"/>
<rect x="320.5" y="549.1" width="6" height="1" fill="#555"/>
<rect x="323" y="561.1" width="1.2" height="1" fill="#777"/>
<rect x="323" y="573.1" width="1.2" height="1" fill="#777"/>
<rect x="323" y="585.1" width="1.2" height="1" fill="#777"/>
<text x="0" y="0" font-size="10.5" text-anchor="middle" fill="#444" font-family="Liberation Sans" transform="translate(327.5 597.6) rotate(-90)">0</text>
<rect x="323" y="609.1" width="1.2" height="1" fill="#777"/>
<rect x="323" y="621.1" width="1.2" height="1" fill="#777"/>
<rect x="323" y="633.1" width="1.2" height="1" fill="#777"/>
<rect x="320.5" y="645.1" width="6" height="1" fill="#555"/>
<rect x="323" y="657.1" width="1.2" height="1" fill="#777"/>
<rect x="323" y="669.1" width="1.2" height="1" fill="#777"/>
<rect x="323" y="681.1" width="1.2" height="1" fill="#777"/>
<text x="0" y="0" font-size="10.5" text-anchor="middle" fill="#444" font-family="Liberation Sans" transform="translate(327.5 693.6) rotate(-90)">1</text>
<rect x="323" y="705.1" width="1.2" height="1" fill="#777"/>
<rect x="323" y="717.1" width="1.2" height="1" fill="#777"/>
<rect x="323" y="729.1" width="1.2" height="1" fill="#777"/>
<rect x="320.5" y="741.1" width="6" height="1" fill="#555"/>
<rect x="323" y="753.1" width="1.2" height="1" fill="#777"/>
<rect x="323" y="765.1" width="1.2" height="1" fill="#777"/>
<rect x="323" y="777.1" width="1.2" height="1" fill="#777"/>
<text x="0" y="0" font-size="10.5" text-anchor="middle" fill="#444" font-family="Liberation Sans" transform="translate(327.5 789.6) rotate(-90)">2</text>
<rect x="323" y="801.1" width="1.2" height="1" fill="#777"/>
<rect x="323" y="813.1" width="1.2" height="1" fill="#777"/>
<rect x="323" y="825.1" width="1.2" height="1" fill="#777"/>
<rect x="320.5" y="837.1" width="6" height="1" fill="#555"/>
<rect x="323" y="849.1" width="1.2" height="1" fill="#777"/>
<rect x="323" y="861.1" width="1.2" height="1" fill="#777"/>
<rect x="323" y="873.1" width="1.2" height="1" fill="#777"/>
<text x="0" y="0" font-size="10.5" text-anchor="middle" fill="#444" font-family="Liberation Sans" transform="translate(327.5 885.6) rotate(-90)">3</text>
<rect x="323" y="897.1" width="1.2" height="1" fill="#777"/>
<rect x="323" y="909.1" width="1.2" height="1" fill="#777"/>
<rect x="323" y="921.1" width="1.2" height="1" fill="#777"/>
<rect x="320.5" y="933.1" width="6" height="1" fill="#555"/>
<rect x="323" y="945.1" width="1.2" height="1" fill="#777"/>
</svg>
<div class="a" style="left:0;top:157px;width:289px;height:860px;overflow:hidden">
<div class="a" style="left:32px;top:16px;width:242px;height:138.5px;border:3.5px solid #6e0f16"></div>
<div class="t c" style="left:15px;top:17.3px;font-size:14px;color:#c43e1c">1</div>
<div class="t c" style="left:15px;top:33.3px;font-size:11px;color:#555">&#9733;</div>
<svg class="a" style="left:35.6px;top:19.3px" width="235" height="132.2" viewBox="481 238 1280 720"><use href="#slide1"/></svg>
<div class="t c" style="left:15px;top:170.3px;font-size:14px;color:#444">2</div>
<div class="t c" style="left:15px;top:186.3px;font-size:11px;color:#555">&#9733;</div>
<div class="a" style="left:35px;top:171.3px;width:236px;height:134px;border:1px solid #c6c6c6"></div>
<svg class="a" style="left:35.6px;top:172.3px" width="235" height="132.2" viewBox="481 238 1280 720"><use href="#bgsym"/><use href="#bggears"/><use href="#logosym"/><use href="#engsym"/><use href="#footsym"/><g transform="translate(-22,-170)"><use href="#item1"/></g><g filter="url(#sh)"><path d="M1003.3,268.2 L1003.5,261.6 L1011.5,262.0 L1011.1,268.5 L1015.6,270.0 L1019.1,264.4 L1025.8,268.8 L1022.1,274.2 L1025.3,277.7 L1031.1,274.7 L1034.7,281.8 L1028.8,284.6 L1029.8,289.3 L1036.4,289.5 L1036.0,297.5 L1029.5,297.1 L1028.0,301.6 L1033.6,305.1 L1029.2,311.8 L1023.8,308.1 L1020.3,311.3 L1023.3,317.1 L1016.2,320.7 L1013.4,314.8 L1008.7,315.8 L1008.5,322.4 L1000.5,322.0 L1000.9,315.5 L996.4,314.0 L992.9,319.6 L986.2,315.2 L989.9,309.8 L986.7,306.3 L980.9,309.3 L977.3,302.2 L983.2,299.4 L982.2,294.7 L975.6,294.5 L976.0,286.5 L982.5,286.9 L984.0,282.4 L978.4,278.9 L982.8,272.2 L988.2,275.9 L991.7,272.7 L988.7,266.9 L995.8,263.3 L998.6,269.2Z" fill="url(#gBody)"/></g>
<circle cx="1006" cy="292" r="18.2" fill="url(#gRing)"/>
<circle cx="1006" cy="292" r="13.5" fill="#0aa8ec"/>
<circle cx="1006" cy="292" r="13.5" fill="none" stroke="#000" stroke-opacity="0.12" stroke-width="1.5"/><g filter="url(#sh)"><path d="M1064.3,254.2 L1064.5,247.6 L1072.5,248.0 L1072.1,254.5 L1076.6,256.0 L1080.1,250.4 L1086.8,254.8 L1083.1,260.2 L1086.3,263.7 L1092.1,260.7 L1095.7,267.8 L1089.8,270.6 L1090.8,275.3 L1097.4,275.5 L1097.0,283.5 L1090.5,283.1 L1089.0,287.6 L1094.6,291.1 L1090.2,297.8 L1084.8,294.1 L1081.3,297.3 L1084.3,303.1 L1077.2,306.7 L1074.4,300.8 L1069.7,301.8 L1069.5,308.4 L1061.5,308.0 L1061.9,301.5 L1057.4,300.0 L1053.9,305.6 L1047.2,301.2 L1050.9,295.8 L1047.7,292.3 L1041.9,295.3 L1038.3,288.2 L1044.2,285.4 L1043.2,280.7 L1036.6,280.5 L1037.0,272.5 L1043.5,272.9 L1045.0,268.4 L1039.4,264.9 L1043.8,258.2 L1049.2,261.9 L1052.7,258.7 L1049.7,252.9 L1056.8,249.3 L1059.6,255.2Z" fill="url(#gBody)"/></g>
<circle cx="1067" cy="278" r="18.2" fill="url(#gRing)"/>
<circle cx="1067" cy="278" r="13.5" fill="#f2e20a"/>
<circle cx="1067" cy="278" r="13.5" fill="none" stroke="#000" stroke-opacity="0.12" stroke-width="1.5"/><g filter="url(#sh)"><path d="M1046.3,315.2 L1046.5,308.6 L1054.5,309.0 L1054.1,315.5 L1058.6,317.0 L1062.1,311.4 L1068.8,315.8 L1065.1,321.2 L1068.3,324.7 L1074.1,321.7 L1077.7,328.8 L1071.8,331.6 L1072.8,336.3 L1079.4,336.5 L1079.0,344.5 L1072.5,344.1 L1071.0,348.6 L1076.6,352.1 L1072.2,358.8 L1066.8,355.1 L1063.3,358.3 L1066.3,364.1 L1059.2,367.7 L1056.4,361.8 L1051.7,362.8 L1051.5,369.4 L1043.5,369.0 L1043.9,362.5 L1039.4,361.0 L1035.9,366.6 L1029.2,362.2 L1032.9,356.8 L1029.7,353.3 L1023.9,356.3 L1020.3,349.2 L1026.2,346.4 L1025.2,341.7 L1018.6,341.5 L1019.0,333.5 L1025.5,333.9 L1027.0,329.4 L1021.4,325.9 L1025.8,319.2 L1031.2,322.9 L1034.7,319.7 L1031.7,313.9 L1038.8,310.3 L1041.6,316.2Z" fill="url(#gBody)"/></g>
<circle cx="1049" cy="339" r="18.2" fill="url(#gRing)"/>
<circle cx="1049" cy="339" r="13.5" fill="#f2e20a"/>
<circle cx="1049" cy="339" r="13.5" fill="none" stroke="#000" stroke-opacity="0.12" stroke-width="1.5"/></svg>
<div class="t c" style="left:15px;top:323.3px;font-size:14px;color:#444">3</div>
<div class="t c" style="left:15px;top:339.3px;font-size:11px;color:#555">&#9733;</div>
<div class="a" style="left:35px;top:324.3px;width:236px;height:134px;border:1px solid #c6c6c6"></div>
<svg class="a" style="left:35.6px;top:325.3px" width="235" height="132.2" viewBox="481 238 1280 720"><use href="#bgsym"/><use href="#bggears"/><use href="#logosym"/><use href="#engsym"/><use href="#footsym"/><g transform="translate(-478,-258)"><use href="#item2"/></g><g filter="url(#sh)"><path d="M1003.3,268.2 L1003.5,261.6 L1011.5,262.0 L1011.1,268.5 L1015.6,270.0 L1019.1,264.4 L1025.8,268.8 L1022.1,274.2 L1025.3,277.7 L1031.1,274.7 L1034.7,281.8 L1028.8,284.6 L1029.8,289.3 L1036.4,289.5 L1036.0,297.5 L1029.5,297.1 L1028.0,301.6 L1033.6,305.1 L1029.2,311.8 L1023.8,308.1 L1020.3,311.3 L1023.3,317.1 L1016.2,320.7 L1013.4,314.8 L1008.7,315.8 L1008.5,322.4 L1000.5,322.0 L1000.9,315.5 L996.4,314.0 L992.9,319.6 L986.2,315.2 L989.9,309.8 L986.7,306.3 L980.9,309.3 L977.3,302.2 L983.2,299.4 L982.2,294.7 L975.6,294.5 L976.0,286.5 L982.5,286.9 L984.0,282.4 L978.4,278.9 L982.8,272.2 L988.2,275.9 L991.7,272.7 L988.7,266.9 L995.8,263.3 L998.6,269.2Z" fill="url(#gBody)"/></g>
<circle cx="1006" cy="292" r="18.2" fill="url(#gRing)"/>
<circle cx="1006" cy="292" r="13.5" fill="#0aa8ec"/>
<circle cx="1006" cy="292" r="13.5" fill="none" stroke="#000" stroke-opacity="0.12" stroke-width="1.5"/><g filter="url(#sh)"><path d="M1064.3,254.2 L1064.5,247.6 L1072.5,248.0 L1072.1,254.5 L1076.6,256.0 L1080.1,250.4 L1086.8,254.8 L1083.1,260.2 L1086.3,263.7 L1092.1,260.7 L1095.7,267.8 L1089.8,270.6 L1090.8,275.3 L1097.4,275.5 L1097.0,283.5 L1090.5,283.1 L1089.0,287.6 L1094.6,291.1 L1090.2,297.8 L1084.8,294.1 L1081.3,297.3 L1084.3,303.1 L1077.2,306.7 L1074.4,300.8 L1069.7,301.8 L1069.5,308.4 L1061.5,308.0 L1061.9,301.5 L1057.4,300.0 L1053.9,305.6 L1047.2,301.2 L1050.9,295.8 L1047.7,292.3 L1041.9,295.3 L1038.3,288.2 L1044.2,285.4 L1043.2,280.7 L1036.6,280.5 L1037.0,272.5 L1043.5,272.9 L1045.0,268.4 L1039.4,264.9 L1043.8,258.2 L1049.2,261.9 L1052.7,258.7 L1049.7,252.9 L1056.8,249.3 L1059.6,255.2Z" fill="url(#gBody)"/></g>
<circle cx="1067" cy="278" r="18.2" fill="url(#gRing)"/>
<circle cx="1067" cy="278" r="13.5" fill="#f2e20a"/>
<circle cx="1067" cy="278" r="13.5" fill="none" stroke="#000" stroke-opacity="0.12" stroke-width="1.5"/><g filter="url(#sh)"><path d="M1046.3,315.2 L1046.5,308.6 L1054.5,309.0 L1054.1,315.5 L1058.6,317.0 L1062.1,311.4 L1068.8,315.8 L1065.1,321.2 L1068.3,324.7 L1074.1,321.7 L1077.7,328.8 L1071.8,331.6 L1072.8,336.3 L1079.4,336.5 L1079.0,344.5 L1072.5,344.1 L1071.0,348.6 L1076.6,352.1 L1072.2,358.8 L1066.8,355.1 L1063.3,358.3 L1066.3,364.1 L1059.2,367.7 L1056.4,361.8 L1051.7,362.8 L1051.5,369.4 L1043.5,369.0 L1043.9,362.5 L1039.4,361.0 L1035.9,366.6 L1029.2,362.2 L1032.9,356.8 L1029.7,353.3 L1023.9,356.3 L1020.3,349.2 L1026.2,346.4 L1025.2,341.7 L1018.6,341.5 L1019.0,333.5 L1025.5,333.9 L1027.0,329.4 L1021.4,325.9 L1025.8,319.2 L1031.2,322.9 L1034.7,319.7 L1031.7,313.9 L1038.8,310.3 L1041.6,316.2Z" fill="url(#gBody)"/></g>
<circle cx="1049" cy="339" r="18.2" fill="url(#gRing)"/>
<circle cx="1049" cy="339" r="13.5" fill="#f2e20a"/>
<circle cx="1049" cy="339" r="13.5" fill="none" stroke="#000" stroke-opacity="0.12" stroke-width="1.5"/></svg>
<div class="t c" style="left:15px;top:476.3px;font-size:14px;color:#444">4</div>
<div class="t c" style="left:15px;top:492.3px;font-size:11px;color:#555">&#9733;</div>
<div class="a" style="left:35px;top:477.3px;width:236px;height:134px;border:1px solid #c6c6c6"></div>
<svg class="a" style="left:35.6px;top:478.3px" width="235" height="132.2" viewBox="481 238 1280 720"><use href="#bgsym"/><use href="#bggears"/><use href="#logosym"/><use href="#engsym"/><use href="#footsym"/><g transform="translate(-22,-350)"><use href="#item3"/></g><g filter="url(#sh)"><path d="M1003.3,268.2 L1003.5,261.6 L1011.5,262.0 L1011.1,268.5 L1015.6,270.0 L1019.1,264.4 L1025.8,268.8 L1022.1,274.2 L1025.3,277.7 L1031.1,274.7 L1034.7,281.8 L1028.8,284.6 L1029.8,289.3 L1036.4,289.5 L1036.0,297.5 L1029.5,297.1 L1028.0,301.6 L1033.6,305.1 L1029.2,311.8 L1023.8,308.1 L1020.3,311.3 L1023.3,317.1 L1016.2,320.7 L1013.4,314.8 L1008.7,315.8 L1008.5,322.4 L1000.5,322.0 L1000.9,315.5 L996.4,314.0 L992.9,319.6 L986.2,315.2 L989.9,309.8 L986.7,306.3 L980.9,309.3 L977.3,302.2 L983.2,299.4 L982.2,294.7 L975.6,294.5 L976.0,286.5 L982.5,286.9 L984.0,282.4 L978.4,278.9 L982.8,272.2 L988.2,275.9 L991.7,272.7 L988.7,266.9 L995.8,263.3 L998.6,269.2Z" fill="url(#gBody)"/></g>
<circle cx="1006" cy="292" r="18.2" fill="url(#gRing)"/>
<circle cx="1006" cy="292" r="13.5" fill="#0aa8ec"/>
<circle cx="1006" cy="292" r="13.5" fill="none" stroke="#000" stroke-opacity="0.12" stroke-width="1.5"/><g filter="url(#sh)"><path d="M1064.3,254.2 L1064.5,247.6 L1072.5,248.0 L1072.1,254.5 L1076.6,256.0 L1080.1,250.4 L1086.8,254.8 L1083.1,260.2 L1086.3,263.7 L1092.1,260.7 L1095.7,267.8 L1089.8,270.6 L1090.8,275.3 L1097.4,275.5 L1097.0,283.5 L1090.5,283.1 L1089.0,287.6 L1094.6,291.1 L1090.2,297.8 L1084.8,294.1 L1081.3,297.3 L1084.3,303.1 L1077.2,306.7 L1074.4,300.8 L1069.7,301.8 L1069.5,308.4 L1061.5,308.0 L1061.9,301.5 L1057.4,300.0 L1053.9,305.6 L1047.2,301.2 L1050.9,295.8 L1047.7,292.3 L1041.9,295.3 L1038.3,288.2 L1044.2,285.4 L1043.2,280.7 L1036.6,280.5 L1037.0,272.5 L1043.5,272.9 L1045.0,268.4 L1039.4,264.9 L1043.8,258.2 L1049.2,261.9 L1052.7,258.7 L1049.7,252.9 L1056.8,249.3 L1059.6,255.2Z" fill="url(#gBody)"/></g>
<circle cx="1067" cy="278" r="18.2" fill="url(#gRing)"/>
<circle cx="1067" cy="278" r="13.5" fill="#f2e20a"/>
<circle cx="1067" cy="278" r="13.5" fill="none" stroke="#000" stroke-opacity="0.12" stroke-width="1.5"/><g filter="url(#sh)"><path d="M1046.3,315.2 L1046.5,308.6 L1054.5,309.0 L1054.1,315.5 L1058.6,317.0 L1062.1,311.4 L1068.8,315.8 L1065.1,321.2 L1068.3,324.7 L1074.1,321.7 L1077.7,328.8 L1071.8,331.6 L1072.8,336.3 L1079.4,336.5 L1079.0,344.5 L1072.5,344.1 L1071.0,348.6 L1076.6,352.1 L1072.2,358.8 L1066.8,355.1 L1063.3,358.3 L1066.3,364.1 L1059.2,367.7 L1056.4,361.8 L1051.7,362.8 L1051.5,369.4 L1043.5,369.0 L1043.9,362.5 L1039.4,361.0 L1035.9,366.6 L1029.2,362.2 L1032.9,356.8 L1029.7,353.3 L1023.9,356.3 L1020.3,349.2 L1026.2,346.4 L1025.2,341.7 L1018.6,341.5 L1019.0,333.5 L1025.5,333.9 L1027.0,329.4 L1021.4,325.9 L1025.8,319.2 L1031.2,322.9 L1034.7,319.7 L1031.7,313.9 L1038.8,310.3 L1041.6,316.2Z" fill="url(#gBody)"/></g>
<circle cx="1049" cy="339" r="18.2" fill="url(#gRing)"/>
<circle cx="1049" cy="339" r="13.5" fill="#f2e20a"/>
<circle cx="1049" cy="339" r="13.5" fill="none" stroke="#000" stroke-opacity="0.12" stroke-width="1.5"/></svg>
<div class="t c" style="left:15px;top:629.3px;font-size:14px;color:#444">5</div>
<div class="t c" style="left:15px;top:645.3px;font-size:11px;color:#555">&#9733;</div>
<div class="a" style="left:35px;top:630.3px;width:236px;height:134px;border:1px solid #c6c6c6"></div>
<svg class="a" style="left:35.6px;top:631.3px" width="235" height="132.2" viewBox="481 238 1280 720"><use href="#bgsym"/><use href="#bggears"/><use href="#logosym"/><use href="#engsym"/><use href="#footsym"/><g transform="translate(-478,-442)"><use href="#item4"/></g><g filter="url(#sh)"><path d="M1003.3,268.2 L1003.5,261.6 L1011.5,262.0 L1011.1,268.5 L1015.6,270.0 L1019.1,264.4 L1025.8,268.8 L1022.1,274.2 L1025.3,277.7 L1031.1,274.7 L1034.7,281.8 L1028.8,284.6 L1029.8,289.3 L1036.4,289.5 L1036.0,297.5 L1029.5,297.1 L1028.0,301.6 L1033.6,305.1 L1029.2,311.8 L1023.8,308.1 L1020.3,311.3 L1023.3,317.1 L1016.2,320.7 L1013.4,314.8 L1008.7,315.8 L1008.5,322.4 L1000.5,322.0 L1000.9,315.5 L996.4,314.0 L992.9,319.6 L986.2,315.2 L989.9,309.8 L986.7,306.3 L980.9,309.3 L977.3,302.2 L983.2,299.4 L982.2,294.7 L975.6,294.5 L976.0,286.5 L982.5,286.9 L984.0,282.4 L978.4,278.9 L982.8,272.2 L988.2,275.9 L991.7,272.7 L988.7,266.9 L995.8,263.3 L998.6,269.2Z" fill="url(#gBody)"/></g>
<circle cx="1006" cy="292" r="18.2" fill="url(#gRing)"/>
<circle cx="1006" cy="292" r="13.5" fill="#0aa8ec"/>
<circle cx="1006" cy="292" r="13.5" fill="none" stroke="#000" stroke-opacity="0.12" stroke-width="1.5"/><g filter="url(#sh)"><path d="M1064.3,254.2 L1064.5,247.6 L1072.5,248.0 L1072.1,254.5 L1076.6,256.0 L1080.1,250.4 L1086.8,254.8 L1083.1,260.2 L1086.3,263.7 L1092.1,260.7 L1095.7,267.8 L1089.8,270.6 L1090.8,275.3 L1097.4,275.5 L1097.0,283.5 L1090.5,283.1 L1089.0,287.6 L1094.6,291.1 L1090.2,297.8 L1084.8,294.1 L1081.3,297.3 L1084.3,303.1 L1077.2,306.7 L1074.4,300.8 L1069.7,301.8 L1069.5,308.4 L1061.5,308.0 L1061.9,301.5 L1057.4,300.0 L1053.9,305.6 L1047.2,301.2 L1050.9,295.8 L1047.7,292.3 L1041.9,295.3 L1038.3,288.2 L1044.2,285.4 L1043.2,280.7 L1036.6,280.5 L1037.0,272.5 L1043.5,272.9 L1045.0,268.4 L1039.4,264.9 L1043.8,258.2 L1049.2,261.9 L1052.7,258.7 L1049.7,252.9 L1056.8,249.3 L1059.6,255.2Z" fill="url(#gBody)"/></g>
<circle cx="1067" cy="278" r="18.2" fill="url(#gRing)"/>
<circle cx="1067" cy="278" r="13.5" fill="#f2e20a"/>
<circle cx="1067" cy="278" r="13.5" fill="none" stroke="#000" stroke-opacity="0.12" stroke-width="1.5"/><g filter="url(#sh)"><path d="M1046.3,315.2 L1046.5,308.6 L1054.5,309.0 L1054.1,315.5 L1058.6,317.0 L1062.1,311.4 L1068.8,315.8 L1065.1,321.2 L1068.3,324.7 L1074.1,321.7 L1077.7,328.8 L1071.8,331.6 L1072.8,336.3 L1079.4,336.5 L1079.0,344.5 L1072.5,344.1 L1071.0,348.6 L1076.6,352.1 L1072.2,358.8 L1066.8,355.1 L1063.3,358.3 L1066.3,364.1 L1059.2,367.7 L1056.4,361.8 L1051.7,362.8 L1051.5,369.4 L1043.5,369.0 L1043.9,362.5 L1039.4,361.0 L1035.9,366.6 L1029.2,362.2 L1032.9,356.8 L1029.7,353.3 L1023.9,356.3 L1020.3,349.2 L1026.2,346.4 L1025.2,341.7 L1018.6,341.5 L1019.0,333.5 L1025.5,333.9 L1027.0,329.4 L1021.4,325.9 L1025.8,319.2 L1031.2,322.9 L1034.7,319.7 L1031.7,313.9 L1038.8,310.3 L1041.6,316.2Z" fill="url(#gBody)"/></g>
<circle cx="1049" cy="339" r="18.2" fill="url(#gRing)"/>
<circle cx="1049" cy="339" r="13.5" fill="#f2e20a"/>
<circle cx="1049" cy="339" r="13.5" fill="none" stroke="#000" stroke-opacity="0.12" stroke-width="1.5"/></svg>
<div class="t c" style="left:15px;top:782.3px;font-size:14px;color:#444">6</div>
<div class="t c" style="left:15px;top:798.3px;font-size:11px;color:#555">&#9733;</div>
<div class="a" style="left:35px;top:783.3px;width:236px;height:134px;border:1px solid #c6c6c6"></div>
<svg class="a" style="left:35.6px;top:784.3px" width="235" height="132.2" viewBox="481 238 1280 720"><use href="#bgsym"/><use href="#bggears"/><use href="#logosym"/><use href="#engsym"/><use href="#footsym"/><g transform="translate(-22,-530)"><use href="#item5"/></g><g filter="url(#sh)"><path d="M1003.3,268.2 L1003.5,261.6 L1011.5,262.0 L1011.1,268.5 L1015.6,270.0 L1019.1,264.4 L1025.8,268.8 L1022.1,274.2 L1025.3,277.7 L1031.1,274.7 L1034.7,281.8 L1028.8,284.6 L1029.8,289.3 L1036.4,289.5 L1036.0,297.5 L1029.5,297.1 L1028.0,301.6 L1033.6,305.1 L1029.2,311.8 L1023.8,308.1 L1020.3,311.3 L1023.3,317.1 L1016.2,320.7 L1013.4,314.8 L1008.7,315.8 L1008.5,322.4 L1000.5,322.0 L1000.9,315.5 L996.4,314.0 L992.9,319.6 L986.2,315.2 L989.9,309.8 L986.7,306.3 L980.9,309.3 L977.3,302.2 L983.2,299.4 L982.2,294.7 L975.6,294.5 L976.0,286.5 L982.5,286.9 L984.0,282.4 L978.4,278.9 L982.8,272.2 L988.2,275.9 L991.7,272.7 L988.7,266.9 L995.8,263.3 L998.6,269.2Z" fill="url(#gBody)"/></g>
<circle cx="1006" cy="292" r="18.2" fill="url(#gRing)"/>
<circle cx="1006" cy="292" r="13.5" fill="#0aa8ec"/>
<circle cx="1006" cy="292" r="13.5" fill="none" stroke="#000" stroke-opacity="0.12" stroke-width="1.5"/><g filter="url(#sh)"><path d="M1064.3,254.2 L1064.5,247.6 L1072.5,248.0 L1072.1,254.5 L1076.6,256.0 L1080.1,250.4 L1086.8,254.8 L1083.1,260.2 L1086.3,263.7 L1092.1,260.7 L1095.7,267.8 L1089.8,270.6 L1090.8,275.3 L1097.4,275.5 L1097.0,283.5 L1090.5,283.1 L1089.0,287.6 L1094.6,291.1 L1090.2,297.8 L1084.8,294.1 L1081.3,297.3 L1084.3,303.1 L1077.2,306.7 L1074.4,300.8 L1069.7,301.8 L1069.5,308.4 L1061.5,308.0 L1061.9,301.5 L1057.4,300.0 L1053.9,305.6 L1047.2,301.2 L1050.9,295.8 L1047.7,292.3 L1041.9,295.3 L1038.3,288.2 L1044.2,285.4 L1043.2,280.7 L1036.6,280.5 L1037.0,272.5 L1043.5,272.9 L1045.0,268.4 L1039.4,264.9 L1043.8,258.2 L1049.2,261.9 L1052.7,258.7 L1049.7,252.9 L1056.8,249.3 L1059.6,255.2Z" fill="url(#gBody)"/></g>
<circle cx="1067" cy="278" r="18.2" fill="url(#gRing)"/>
<circle cx="1067" cy="278" r="13.5" fill="#f2e20a"/>
<circle cx="1067" cy="278" r="13.5" fill="none" stroke="#000" stroke-opacity="0.12" stroke-width="1.5"/><g filter="url(#sh)"><path d="M1046.3,315.2 L1046.5,308.6 L1054.5,309.0 L1054.1,315.5 L1058.6,317.0 L1062.1,311.4 L1068.8,315.8 L1065.1,321.2 L1068.3,324.7 L1074.1,321.7 L1077.7,328.8 L1071.8,331.6 L1072.8,336.3 L1079.4,336.5 L1079.0,344.5 L1072.5,344.1 L1071.0,348.6 L1076.6,352.1 L1072.2,358.8 L1066.8,355.1 L1063.3,358.3 L1066.3,364.1 L1059.2,367.7 L1056.4,361.8 L1051.7,362.8 L1051.5,369.4 L1043.5,369.0 L1043.9,362.5 L1039.4,361.0 L1035.9,366.6 L1029.2,362.2 L1032.9,356.8 L1029.7,353.3 L1023.9,356.3 L1020.3,349.2 L1026.2,346.4 L1025.2,341.7 L1018.6,341.5 L1019.0,333.5 L1025.5,333.9 L1027.0,329.4 L1021.4,325.9 L1025.8,319.2 L1031.2,322.9 L1034.7,319.7 L1031.7,313.9 L1038.8,310.3 L1041.6,316.2Z" fill="url(#gBody)"/></g>
<circle cx="1049" cy="339" r="18.2" fill="url(#gRing)"/>
<circle cx="1049" cy="339" r="13.5" fill="#f2e20a"/>
<circle cx="1049" cy="339" r="13.5" fill="none" stroke="#000" stroke-opacity="0.12" stroke-width="1.5"/></svg>
</div>
<div class="t" style="left:8px;top:1022.5px;font-size:11.6px;color:#444">Slide 1 of 7</div>
<svg class="a" style="left:82px;top:1019px" width="20" height="14" fill="none" stroke="#555" stroke-width="1"><path d="M2.5 1.5h6v11h-6zM8.5 3.5h3M11 12.5h-2"/><path d="M12 5l5 6M17 5l-5 6"/></svg>
<div class="t" style="left:116px;top:1022.5px;font-size:11.6px;color:#444">English (Indonesia)</div>
<svg class="a" style="left:1395px;top:1018px" width="20" height="15" fill="none" stroke="#555"><path d="M6 8.5l5-4 5 4" transform="translate(-1 0)"/><path d="M5 10.5h10M5 13.5h10"/></svg>
<div class="t" style="left:1416px;top:1022.5px;font-size:11.6px;color:#444">Notes</div>
<svg class="a" style="left:1465px;top:1018px" width="18" height="15"><path d="M1.5 3.5h13v8h-7l-3 3v-3h-3z" fill="#555"/></svg>
<div class="t" style="left:1483px;top:1022.5px;font-size:11.6px;color:#444">Comments</div>
<div class="a" style="left:1557px;top:1018px;width:39px;height:15px;background:#c6c6c6"></div>
<svg class="a" style="left:1560px;top:1018px" width="160" height="15" fill="none" stroke="#555"><path d="M10.5 4.5h12v10h-12zM13.5 7.5h6v3h-6z"/><path d="M49.5 4.5h4v3h-4zM57.5 4.5h4v3h-4zM49.5 11.5h4v3h-4zM57.5 11.5h4v3h-4z"/><path d="M88.5 5.5h13v9h-13zM95 5.5v9M90.5 8h3M90.5 10.5h3M96.5 8h3M96.5 10.5h3"/><path d="M128.5 6.5h13M130.5 6.5v5h9v-5M135 11.5v3"/></svg>
<svg class="a" style="left:1720px;top:1018px" width="175" height="15"><path d="M2 9.5h8" stroke="#555"/><path d="M15 9.5h100" stroke="#aaa"/><rect x="63" y="4" width="4" height="11" fill="#666"/><path d="M119 9.5h8M123 5.5v8" stroke="#555"/></svg>
<div class="t" style="left:1861px;top:1022.5px;font-size:11.6px;color:#444">100%</div>
<!-- /PANE -->
</body></html>
